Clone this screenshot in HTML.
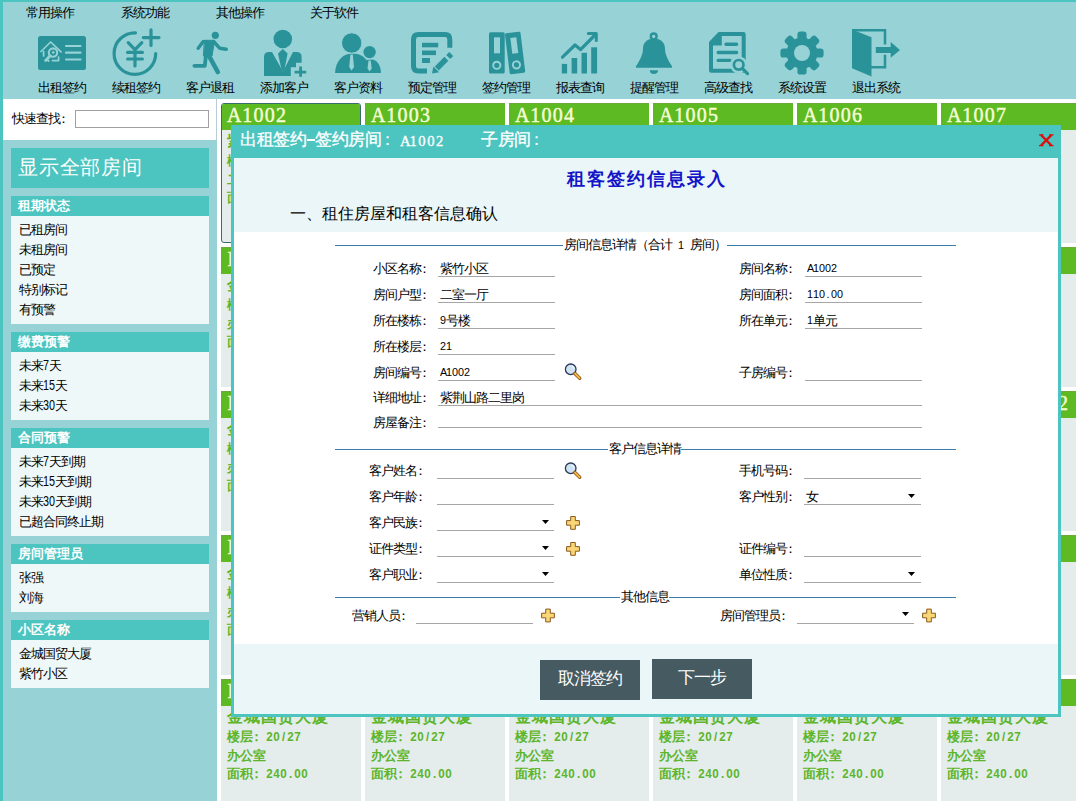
<!DOCTYPE html>
<html><head><meta charset="utf-8"><style>
*{margin:0;padding:0;box-sizing:border-box}
body{width:1076px;height:801px;overflow:hidden;position:relative;background:#fff;font-family:"Liberation Sans",sans-serif;font-size:12px;color:#000}
.a{position:absolute;white-space:nowrap}
.blk{left:11px;width:198px}
.bh{height:20px;background:#4cc4bf;color:#fff;font-weight:900;padding-left:7px;line-height:20px}
.bl{background:#eef8f9;padding:4px 0 4px 8px;line-height:20px}
.card{width:140px;height:140px;background:#e4ecec;overflow:hidden}
.ch{position:absolute;left:0;top:0;width:140px;height:27px;background:#5dba22;border-top:1px solid #6ca83e}
.cn{position:absolute;top:-1px;color:#f6ffd6;font-family:"Liberation Serif",serif;font-size:20px;line-height:27px;-webkit-text-stroke:0.45px #f6ffd6}
.cb{position:absolute;left:6px;color:#5cb52a;font-weight:bold;white-space:nowrap}
.ul{position:absolute;height:1px;background:#a6a6a6}
.fsl{position:absolute;height:1px;background:#3a7dab}
.btn{position:absolute;background:#465a61;color:#fff;text-align:center;font-weight:300}
</style></head><body>
<div class="a" style="left:0;top:0;width:1076px;height:99px;background:#96d2d6"></div>
<div class="a" style="left:0;top:0;width:1076px;height:2px;background:#4cc4bf"></div>
<div class="a" style="left:0;top:0;width:3px;height:801px;background:#4cc4bf"></div>
<div class="a" style="left:26px;top:5px;line-height:16px;"><span style="font-size:13.00px;letter-spacing:-1.00px;line-height:0">常用操作</span></div>
<div class="a" style="left:121px;top:5px;line-height:16px;"><span style="font-size:13.00px;letter-spacing:-1.00px;line-height:0">系统功能</span></div>
<div class="a" style="left:216px;top:5px;line-height:16px;"><span style="font-size:13.00px;letter-spacing:-1.00px;line-height:0">其他操作</span></div>
<div class="a" style="left:310px;top:5px;line-height:16px;"><span style="font-size:13.00px;letter-spacing:-1.00px;line-height:0">关于软件</span></div>
<div class="a" style="left:38px;top:80px;line-height:16px;"><span style="font-size:13.00px;letter-spacing:-1.00px;line-height:0">出租签约</span></div>
<div class="a" style="left:112px;top:80px;line-height:16px;"><span style="font-size:13.00px;letter-spacing:-1.00px;line-height:0">续租签约</span></div>
<div class="a" style="left:186px;top:80px;line-height:16px;"><span style="font-size:13.00px;letter-spacing:-1.00px;line-height:0">客户退租</span></div>
<div class="a" style="left:260px;top:80px;line-height:16px;"><span style="font-size:13.00px;letter-spacing:-1.00px;line-height:0">添加客户</span></div>
<div class="a" style="left:334px;top:80px;line-height:16px;"><span style="font-size:13.00px;letter-spacing:-1.00px;line-height:0">客户资料</span></div>
<div class="a" style="left:408px;top:80px;line-height:16px;"><span style="font-size:13.00px;letter-spacing:-1.00px;line-height:0">预定管理</span></div>
<div class="a" style="left:482px;top:80px;line-height:16px;"><span style="font-size:13.00px;letter-spacing:-1.00px;line-height:0">签约管理</span></div>
<div class="a" style="left:556px;top:80px;line-height:16px;"><span style="font-size:13.00px;letter-spacing:-1.00px;line-height:0">报表查询</span></div>
<div class="a" style="left:630px;top:80px;line-height:16px;"><span style="font-size:13.00px;letter-spacing:-1.00px;line-height:0">提醒管理</span></div>
<div class="a" style="left:704px;top:80px;line-height:16px;"><span style="font-size:13.00px;letter-spacing:-1.00px;line-height:0">高级查找</span></div>
<div class="a" style="left:778px;top:80px;line-height:16px;"><span style="font-size:13.00px;letter-spacing:-1.00px;line-height:0">系统设置</span></div>
<div class="a" style="left:852px;top:80px;line-height:16px;"><span style="font-size:13.00px;letter-spacing:-1.00px;line-height:0">退出系统</span></div>
<svg class="a" style="left:0;top:0" width="1076" height="99" viewBox="0 0 1076 99">
<!-- 1 出租签约 -->
<rect x="38" y="36" width="48" height="34" rx="2.5" fill="#2a939a"/>
<g fill="none" stroke="#96d2d6" stroke-width="1.7" stroke-linecap="round" stroke-linejoin="round">
<path d="M41 51.5 L50.7 42 L61 51.8"/>
<path d="M43.6 51.5 V56"/>
<path d="M52.5 60.6 H58.6 V57"/>
<circle cx="53" cy="52.6" r="4.2" stroke-width="2.1"/>
<circle cx="53.2" cy="52.4" r="0.9" fill="#96d2d6" stroke-width="1"/>
<path d="M50.2 55.8 L45.6 60.4" stroke-width="2.8"/>
<path d="M47.2 59.6 L48.6 61" stroke-width="1.8"/>
</g>
<g stroke="#96d2d6" stroke-width="2.2" stroke-linecap="round">
<path d="M66 46 H80.5 M66 52.7 H80.5 M66 59.5 H80.5"/>
</g>
<!-- 2 续租签约 -->
<g fill="none" stroke="#2a939a" stroke-width="3.2" stroke-linecap="round">
<path d="M135.5 32.8 A20.8 20.8 0 1 0 155.7 53.6"/>
<path d="M151 29.8 V45.5 M143.3 37.6 H159"/>
<path d="M128.2 42.6 L135 49.6 L141.8 42.6 M127.6 52.4 H142.4 M127.6 59 H142.4 M135 49.6 V66"/>
</g>
<!-- 3 客户退租 -->
<circle cx="215.3" cy="35.3" r="3.6" fill="#2a939a"/>
<g fill="none" stroke="#2a939a" stroke-linecap="round" stroke-linejoin="round">
<path d="M204.6 40.3 L214.6 40.3 L212 56 L203.8 56 Z" fill="#2a939a" stroke="#2a939a" stroke-width="1" stroke-linejoin="round"/>
<path d="M207 41.8 H203 L198.2 48.3" stroke-width="3.4"/>
<path d="M213.6 41.5 L219.6 48.2 L226.3 49.3" stroke-width="3.4"/>
<path d="M206 55 L204.8 65.8 L194.4 65.8" stroke-width="3.8"/>
<path d="M208.8 55.5 L217.8 72" stroke-width="4.6"/>
</g>
<!-- 4 添加客户 -->
<circle cx="282.8" cy="39" r="9.3" fill="#2a939a"/>
<path d="M264 76 V57 Q264 52 269 52 H272 L283 71.5 L293 52 H296.6 Q301.6 52 301.6 57 V62.8 H296 V67.2 H290.8 V76 Z" fill="#2a939a"/>
<path d="M282.8 49 L287.6 53.6 L284.2 70.8 L281.8 70.8 L278 53.6 Z" fill="#2a939a"/>
<path d="M294.6 72.2 H306.2 M300.6 66.4 V76.8" stroke="#2a939a" stroke-width="2.8"/>
<!-- 5 客户资料 -->
<path d="M335 73 C335.5 62 342 53.5 352 53.5 C360 53.5 365 57 367 61 L370 73 Z" fill="#2a939a"/>
<path d="M361 73 C361 64.5 364.5 59.3 370.5 59.3 C376.5 59.3 380.8 64.5 381 73 Z" fill="#2a939a"/>
<circle cx="351.7" cy="43" r="10.2" fill="#2a939a" stroke="#96d2d6" stroke-width="1"/>
<circle cx="369.6" cy="52.1" r="6.9" fill="#2a939a" stroke="#96d2d6" stroke-width="1.4"/>
<rect x="334" y="73" width="49" height="3" fill="#96d2d6"/>
<path d="M350.4 54.6 L352.8 54.6 L354 67 L351.6 70.6 L349.2 67 Z" fill="#96d2d6"/>
<path d="M368.5 60.4 L370.7 60.4 L371.7 68.6 L369.6 71.6 L367.5 68.6 Z" fill="#96d2d6"/>
<!-- 6 预定管理 -->
<path d="M427 71 H418.5 Q413.5 71 413.5 66 V39.5 Q413.5 34.6 418.5 34.6 H445 Q449.8 34.6 449.8 39.5 V47.8" fill="none" stroke="#2a939a" stroke-width="5"/>
<rect x="422" y="42.8" width="16.2" height="4.5" fill="#2a939a"/>
<rect x="422" y="50.5" width="14" height="4.6" fill="#2a939a"/>
<rect x="422" y="58" width="8" height="5" fill="#2a939a"/>
<path d="M436.8 68.4 L446.4 58.8" stroke="#2a939a" stroke-width="5.6"/>
<path d="M448.2 57 L451.2 54" stroke="#2a939a" stroke-width="5.6"/>
<path d="M432 73.6 L433.4 66.6 L439.2 72.2 Z" fill="#2a939a"/>
<!-- 7 签约管理 -->
<rect x="489" y="32.2" width="15.7" height="41.3" rx="1.5" fill="#2a939a"/>
<rect x="494" y="37.3" width="6" height="16" fill="#96d2d6"/>
<circle cx="496.8" cy="65.3" r="3.6" fill="none" stroke="#96d2d6" stroke-width="1.9"/>
<g transform="rotate(-7 515 53)">
<rect x="507.3" y="32.4" width="15.6" height="41.2" rx="1.5" fill="#2a939a"/>
<rect x="512.2" y="37.5" width="6" height="16" fill="#96d2d6"/>
<circle cx="515" cy="65" r="3.6" fill="none" stroke="#96d2d6" stroke-width="1.9"/>
</g>
<!-- 8 报表查询 -->
<rect x="561.8" y="63.9" width="5.3" height="9.6" fill="#2a939a"/>
<rect x="571.6" y="58" width="5.6" height="15.5" fill="#2a939a"/>
<rect x="581.5" y="52.8" width="5.5" height="20.7" fill="#2a939a"/>
<rect x="591.2" y="47.3" width="5.9" height="26.2" fill="#2a939a"/>
<path d="M562.5 57.2 L575 45 L580.5 49.6 L595 35" fill="none" stroke="#2a939a" stroke-width="3.2" stroke-linecap="round" stroke-linejoin="round"/>
<path d="M588.3 33.4 H596.3 V40.6" fill="none" stroke="#2a939a" stroke-width="3" stroke-linecap="round" stroke-linejoin="round"/>
<!-- 9 提醒管理 -->
<circle cx="653.7" cy="36.4" r="2.9" fill="none" stroke="#2a939a" stroke-width="2.4"/>
<path d="M637 67.8 Q635 67.8 636.3 65.8 C641 59 643 53 643 48.5 C643 42.5 647.5 38.6 654 38.6 C660.5 38.6 665 42.5 665 48.5 C665 53 667 59 671.7 65.8 Q673 67.8 671 67.8 Z" fill="#2a939a"/>
<path d="M649.8 70.3 A4.1 3.6 0 0 0 658 70.3 Z" fill="#2a939a"/>
<!-- 10 高级查找 -->
<path fill-rule="evenodd" fill="#2a939a" d="M709 42 L718.5 32 H743.5 Q745.7 32 745.7 34.2 V70.5 Q745.7 72.7 743.5 72.7 H711.2 Q709 72.7 709 70.5 Z M713 45.5 H721.8 V36 H741.7 V68.7 H713 Z"/>
<path d="M726 44.2 H736.6 M718.2 52.5 H736.6 M718.2 60.4 H730" stroke="#2a939a" stroke-width="3.4" stroke-linecap="round"/>
<circle cx="738.7" cy="64.8" r="8.6" fill="#96d2d6"/>
<circle cx="738.7" cy="64.8" r="4.8" fill="none" stroke="#2a939a" stroke-width="2.7"/>
<path d="M742.5 68.6 L747.5 73.6" stroke="#2a939a" stroke-width="3.2" stroke-linecap="round"/>
<!-- 11 系统设置 -->
<circle cx="802" cy="53" r="15.5" fill="#2a939a"/><rect x="797.4" y="31.4" width="9.2" height="12" rx="3.2" fill="#2a939a" transform="rotate(0 802 53)"/><rect x="797.4" y="31.4" width="9.2" height="12" rx="3.2" fill="#2a939a" transform="rotate(45 802 53)"/><rect x="797.4" y="31.4" width="9.2" height="12" rx="3.2" fill="#2a939a" transform="rotate(90 802 53)"/><rect x="797.4" y="31.4" width="9.2" height="12" rx="3.2" fill="#2a939a" transform="rotate(135 802 53)"/><rect x="797.4" y="31.4" width="9.2" height="12" rx="3.2" fill="#2a939a" transform="rotate(180 802 53)"/><rect x="797.4" y="31.4" width="9.2" height="12" rx="3.2" fill="#2a939a" transform="rotate(225 802 53)"/><rect x="797.4" y="31.4" width="9.2" height="12" rx="3.2" fill="#2a939a" transform="rotate(270 802 53)"/><rect x="797.4" y="31.4" width="9.2" height="12" rx="3.2" fill="#2a939a" transform="rotate(315 802 53)"/><circle cx="802" cy="53" r="8" fill="#96d2d6"/>
<!-- 12 退出系统 -->
<path d="M852 30.2 H885 V44.6 M885 54.7 V67.2 H871" fill="none" stroke="#2a939a" stroke-width="2.5"/>
<path d="M852 29 L857 31.4 L871.5 37.2 V76.6 L852 68.3 Z" fill="#2a939a"/>
<rect x="875.8" y="47" width="15.5" height="6" fill="#2a939a"/>
<path d="M890.7 42 L900 50 L890.7 57.8 Z" fill="#2a939a"/>
</svg>
<div class="a" style="left:3px;top:99px;width:214px;height:702px;background:#96d2d6"></div>
<div class="a" style="left:3px;top:99px;width:213px;height:41px;background:#fff"></div>
<div class="a" style="left:216px;top:99px;width:1px;height:41px;background:#b9cdd9"></div>
<div class="a" style="left:12px;top:111px;line-height:16px;"><span style="font-size:13.00px;letter-spacing:-1.00px;line-height:0">快速查找</span><span style="font-size:13.00px;letter-spacing:-1.00px;line-height:0;position:relative;left:-2.64px">：</span></div>
<div class="a" style="left:75px;top:110px;width:134px;height:18px;border:1px solid #a0a0a0;background:#fff"></div>
<div class="a blk" style="top:148px;height:40px;background:#4cc4bf"></div>
<div class="a" style="left:18px;top:156px;line-height:24px;color:#fff;font-family:'Liberation Serif',serif"><span style="font-size:19.5px;letter-spacing:0.8px">显示全部房间</span></div>
<div class="a blk" style="top:196px"><div class="bh"><span style="font-size:13.00px;letter-spacing:0.00px;line-height:0">租期状态</span></div><div class="bl"><div><span style="font-size:13.00px;letter-spacing:-1.00px;line-height:0">已租房间</span></div><div><span style="font-size:13.00px;letter-spacing:-1.00px;line-height:0">未租房间</span></div><div><span style="font-size:13.00px;letter-spacing:-1.00px;line-height:0">已预定</span></div><div><span style="font-size:13.00px;letter-spacing:-1.00px;line-height:0">特别标记</span></div><div><span style="font-size:13.00px;letter-spacing:-1.00px;line-height:0">有预警</span></div></div></div>
<div class="a blk" style="top:332px"><div class="bh"><span style="font-size:13.00px;letter-spacing:0.00px;line-height:0">缴费预警</span></div><div class="bl"><div><span style="font-size:13.00px;letter-spacing:-1.00px;line-height:0">未来</span><span style="display:inline-block;width:6.0px;padding-left:0.00px;line-height:0;font-size:14.00px;transform:scaleX(0.77);transform-origin:0 0">7</span><span style="font-size:13.00px;letter-spacing:-1.00px;line-height:0">天</span></div><div><span style="font-size:13.00px;letter-spacing:-1.00px;line-height:0">未来</span><span style="display:inline-block;width:6.0px;padding-left:0.00px;line-height:0;font-size:14.00px;transform:scaleX(0.77);transform-origin:0 0">1</span><span style="display:inline-block;width:6.0px;padding-left:0.00px;line-height:0;font-size:14.00px;transform:scaleX(0.77);transform-origin:0 0">5</span><span style="font-size:13.00px;letter-spacing:-1.00px;line-height:0">天</span></div><div><span style="font-size:13.00px;letter-spacing:-1.00px;line-height:0">未来</span><span style="display:inline-block;width:6.0px;padding-left:0.00px;line-height:0;font-size:14.00px;transform:scaleX(0.77);transform-origin:0 0">3</span><span style="display:inline-block;width:6.0px;padding-left:0.00px;line-height:0;font-size:14.00px;transform:scaleX(0.77);transform-origin:0 0">0</span><span style="font-size:13.00px;letter-spacing:-1.00px;line-height:0">天</span></div></div></div>
<div class="a blk" style="top:428px"><div class="bh"><span style="font-size:13.00px;letter-spacing:0.00px;line-height:0">合同预警</span></div><div class="bl"><div><span style="font-size:13.00px;letter-spacing:-1.00px;line-height:0">未来</span><span style="display:inline-block;width:6.0px;padding-left:0.00px;line-height:0;font-size:14.00px;transform:scaleX(0.77);transform-origin:0 0">7</span><span style="font-size:13.00px;letter-spacing:-1.00px;line-height:0">天到期</span></div><div><span style="font-size:13.00px;letter-spacing:-1.00px;line-height:0">未来</span><span style="display:inline-block;width:6.0px;padding-left:0.00px;line-height:0;font-size:14.00px;transform:scaleX(0.77);transform-origin:0 0">1</span><span style="display:inline-block;width:6.0px;padding-left:0.00px;line-height:0;font-size:14.00px;transform:scaleX(0.77);transform-origin:0 0">5</span><span style="font-size:13.00px;letter-spacing:-1.00px;line-height:0">天到期</span></div><div><span style="font-size:13.00px;letter-spacing:-1.00px;line-height:0">未来</span><span style="display:inline-block;width:6.0px;padding-left:0.00px;line-height:0;font-size:14.00px;transform:scaleX(0.77);transform-origin:0 0">3</span><span style="display:inline-block;width:6.0px;padding-left:0.00px;line-height:0;font-size:14.00px;transform:scaleX(0.77);transform-origin:0 0">0</span><span style="font-size:13.00px;letter-spacing:-1.00px;line-height:0">天到期</span></div><div><span style="font-size:13.00px;letter-spacing:-1.00px;line-height:0">已超合同终止期</span></div></div></div>
<div class="a blk" style="top:544px"><div class="bh"><span style="font-size:13.00px;letter-spacing:0.00px;line-height:0">房间管理员</span></div><div class="bl"><div><span style="font-size:13.00px;letter-spacing:-1.00px;line-height:0">张强</span></div><div><span style="font-size:13.00px;letter-spacing:-1.00px;line-height:0">刘海</span></div></div></div>
<div class="a blk" style="top:620px"><div class="bh"><span style="font-size:13.00px;letter-spacing:0.00px;line-height:0">小区名称</span></div><div class="bl"><div><span style="font-size:13.00px;letter-spacing:-1.00px;line-height:0">金城国贸大厦</span></div><div><span style="font-size:13.00px;letter-spacing:-1.00px;line-height:0">紫竹小区</span></div></div></div>
<div class="a" style="left:217px;top:99px;width:859px;height:702px;background:#fff"></div>
<div class="a card" style="left:221px;top:103px;border:1px solid #3a6c6c;border-radius:3px;"><div style="position:absolute;left:-1px;top:-1px;width:140px;height:140px"><div class="ch"></div><div class="cn" style="left:6px"><span style="display:inline-block;width:14.5px;text-align:center">A</span><span style="display:inline-block;width:11.3px;text-align:center">1</span><span style="display:inline-block;width:11.3px;text-align:center">0</span><span style="display:inline-block;width:11.3px;text-align:center">0</span><span style="display:inline-block;width:11.3px;text-align:center">2</span></div><div class="cb" style="top:29px;line-height:20px;letter-spacing:0"><span style="font-size:16.00px;letter-spacing:1.00px;line-height:0">紫竹小区</span></div><div class="cb" style="top:50px;line-height:16px"><span style="font-size:13.00px;letter-spacing:0.00px;line-height:0">楼层</span><span style="font-size:13.00px;letter-spacing:0.00px;line-height:0;position:relative;left:-2.86px">：</span><span style="display:inline-block;width:7px;padding-left:0.28px;line-height:0;font-size:11.96px;transform:scaleX(0.97);transform-origin:0 0">2</span><span style="display:inline-block;width:7px;padding-left:0.28px;line-height:0;font-size:11.96px;transform:scaleX(0.97);transform-origin:0 0">1</span><span style="display:inline-block;width:7px;padding-left:1.95px;line-height:0;font-size:11.96px;transform:scaleX(0.97);transform-origin:0 0">/</span><span style="display:inline-block;width:7px;padding-left:0.28px;line-height:0;font-size:11.96px;transform:scaleX(0.97);transform-origin:0 0">3</span><span style="display:inline-block;width:7px;padding-left:0.28px;line-height:0;font-size:11.96px;transform:scaleX(0.97);transform-origin:0 0">2</span></div><div class="cb" style="top:69px;line-height:16px"><span style="font-size:13.00px;letter-spacing:0.00px;line-height:0">二室一厅</span></div><div class="cb" style="top:87px;line-height:16px"><span style="font-size:13.00px;letter-spacing:0.00px;line-height:0">面积</span><span style="font-size:13.00px;letter-spacing:0.00px;line-height:0;position:relative;left:-2.86px">：</span><span style="display:inline-block;width:7px;padding-left:0.28px;line-height:0;font-size:11.96px;transform:scaleX(0.97);transform-origin:0 0">1</span><span style="display:inline-block;width:7px;padding-left:0.28px;line-height:0;font-size:11.96px;transform:scaleX(0.97);transform-origin:0 0">1</span><span style="display:inline-block;width:7px;padding-left:0.28px;line-height:0;font-size:11.96px;transform:scaleX(0.97);transform-origin:0 0">0</span><span style="display:inline-block;width:7px;padding-left:1.95px;line-height:0;font-size:11.96px;transform:scaleX(0.97);transform-origin:0 0">.</span><span style="display:inline-block;width:7px;padding-left:0.28px;line-height:0;font-size:11.96px;transform:scaleX(0.97);transform-origin:0 0">0</span><span style="display:inline-block;width:7px;padding-left:0.28px;line-height:0;font-size:11.96px;transform:scaleX(0.97);transform-origin:0 0">0</span></div></div></div>
<div class="a card" style="left:365px;top:103px"><div class="ch"></div><div class="cn" style="left:6px"><span style="display:inline-block;width:14.5px;text-align:center">A</span><span style="display:inline-block;width:11.3px;text-align:center">1</span><span style="display:inline-block;width:11.3px;text-align:center">0</span><span style="display:inline-block;width:11.3px;text-align:center">0</span><span style="display:inline-block;width:11.3px;text-align:center">3</span></div><div class="cb" style="top:29px;line-height:20px;letter-spacing:0"><span style="font-size:16.00px;letter-spacing:1.00px;line-height:0">金城国贸大厦</span></div><div class="cb" style="top:50px;line-height:16px"><span style="font-size:13.00px;letter-spacing:0.00px;line-height:0">楼层</span><span style="font-size:13.00px;letter-spacing:0.00px;line-height:0;position:relative;left:-2.86px">：</span><span style="display:inline-block;width:7px;padding-left:0.28px;line-height:0;font-size:11.96px;transform:scaleX(0.97);transform-origin:0 0">2</span><span style="display:inline-block;width:7px;padding-left:0.28px;line-height:0;font-size:11.96px;transform:scaleX(0.97);transform-origin:0 0">0</span><span style="display:inline-block;width:7px;padding-left:1.95px;line-height:0;font-size:11.96px;transform:scaleX(0.97);transform-origin:0 0">/</span><span style="display:inline-block;width:7px;padding-left:0.28px;line-height:0;font-size:11.96px;transform:scaleX(0.97);transform-origin:0 0">2</span><span style="display:inline-block;width:7px;padding-left:0.28px;line-height:0;font-size:11.96px;transform:scaleX(0.97);transform-origin:0 0">7</span></div><div class="cb" style="top:69px;line-height:16px"><span style="font-size:13.00px;letter-spacing:0.00px;line-height:0">办公室</span></div><div class="cb" style="top:87px;line-height:16px"><span style="font-size:13.00px;letter-spacing:0.00px;line-height:0">面积</span><span style="font-size:13.00px;letter-spacing:0.00px;line-height:0;position:relative;left:-2.86px">：</span><span style="display:inline-block;width:7px;padding-left:0.28px;line-height:0;font-size:11.96px;transform:scaleX(0.97);transform-origin:0 0">2</span><span style="display:inline-block;width:7px;padding-left:0.28px;line-height:0;font-size:11.96px;transform:scaleX(0.97);transform-origin:0 0">4</span><span style="display:inline-block;width:7px;padding-left:0.28px;line-height:0;font-size:11.96px;transform:scaleX(0.97);transform-origin:0 0">0</span><span style="display:inline-block;width:7px;padding-left:1.95px;line-height:0;font-size:11.96px;transform:scaleX(0.97);transform-origin:0 0">.</span><span style="display:inline-block;width:7px;padding-left:0.28px;line-height:0;font-size:11.96px;transform:scaleX(0.97);transform-origin:0 0">0</span><span style="display:inline-block;width:7px;padding-left:0.28px;line-height:0;font-size:11.96px;transform:scaleX(0.97);transform-origin:0 0">0</span></div></div>
<div class="a card" style="left:509px;top:103px"><div class="ch"></div><div class="cn" style="left:6px"><span style="display:inline-block;width:14.5px;text-align:center">A</span><span style="display:inline-block;width:11.3px;text-align:center">1</span><span style="display:inline-block;width:11.3px;text-align:center">0</span><span style="display:inline-block;width:11.3px;text-align:center">0</span><span style="display:inline-block;width:11.3px;text-align:center">4</span></div><div class="cb" style="top:29px;line-height:20px;letter-spacing:0"><span style="font-size:16.00px;letter-spacing:1.00px;line-height:0">金城国贸大厦</span></div><div class="cb" style="top:50px;line-height:16px"><span style="font-size:13.00px;letter-spacing:0.00px;line-height:0">楼层</span><span style="font-size:13.00px;letter-spacing:0.00px;line-height:0;position:relative;left:-2.86px">：</span><span style="display:inline-block;width:7px;padding-left:0.28px;line-height:0;font-size:11.96px;transform:scaleX(0.97);transform-origin:0 0">2</span><span style="display:inline-block;width:7px;padding-left:0.28px;line-height:0;font-size:11.96px;transform:scaleX(0.97);transform-origin:0 0">0</span><span style="display:inline-block;width:7px;padding-left:1.95px;line-height:0;font-size:11.96px;transform:scaleX(0.97);transform-origin:0 0">/</span><span style="display:inline-block;width:7px;padding-left:0.28px;line-height:0;font-size:11.96px;transform:scaleX(0.97);transform-origin:0 0">2</span><span style="display:inline-block;width:7px;padding-left:0.28px;line-height:0;font-size:11.96px;transform:scaleX(0.97);transform-origin:0 0">7</span></div><div class="cb" style="top:69px;line-height:16px"><span style="font-size:13.00px;letter-spacing:0.00px;line-height:0">办公室</span></div><div class="cb" style="top:87px;line-height:16px"><span style="font-size:13.00px;letter-spacing:0.00px;line-height:0">面积</span><span style="font-size:13.00px;letter-spacing:0.00px;line-height:0;position:relative;left:-2.86px">：</span><span style="display:inline-block;width:7px;padding-left:0.28px;line-height:0;font-size:11.96px;transform:scaleX(0.97);transform-origin:0 0">2</span><span style="display:inline-block;width:7px;padding-left:0.28px;line-height:0;font-size:11.96px;transform:scaleX(0.97);transform-origin:0 0">4</span><span style="display:inline-block;width:7px;padding-left:0.28px;line-height:0;font-size:11.96px;transform:scaleX(0.97);transform-origin:0 0">0</span><span style="display:inline-block;width:7px;padding-left:1.95px;line-height:0;font-size:11.96px;transform:scaleX(0.97);transform-origin:0 0">.</span><span style="display:inline-block;width:7px;padding-left:0.28px;line-height:0;font-size:11.96px;transform:scaleX(0.97);transform-origin:0 0">0</span><span style="display:inline-block;width:7px;padding-left:0.28px;line-height:0;font-size:11.96px;transform:scaleX(0.97);transform-origin:0 0">0</span></div></div>
<div class="a card" style="left:653px;top:103px"><div class="ch"></div><div class="cn" style="left:6px"><span style="display:inline-block;width:14.5px;text-align:center">A</span><span style="display:inline-block;width:11.3px;text-align:center">1</span><span style="display:inline-block;width:11.3px;text-align:center">0</span><span style="display:inline-block;width:11.3px;text-align:center">0</span><span style="display:inline-block;width:11.3px;text-align:center">5</span></div><div class="cb" style="top:29px;line-height:20px;letter-spacing:0"><span style="font-size:16.00px;letter-spacing:1.00px;line-height:0">金城国贸大厦</span></div><div class="cb" style="top:50px;line-height:16px"><span style="font-size:13.00px;letter-spacing:0.00px;line-height:0">楼层</span><span style="font-size:13.00px;letter-spacing:0.00px;line-height:0;position:relative;left:-2.86px">：</span><span style="display:inline-block;width:7px;padding-left:0.28px;line-height:0;font-size:11.96px;transform:scaleX(0.97);transform-origin:0 0">2</span><span style="display:inline-block;width:7px;padding-left:0.28px;line-height:0;font-size:11.96px;transform:scaleX(0.97);transform-origin:0 0">0</span><span style="display:inline-block;width:7px;padding-left:1.95px;line-height:0;font-size:11.96px;transform:scaleX(0.97);transform-origin:0 0">/</span><span style="display:inline-block;width:7px;padding-left:0.28px;line-height:0;font-size:11.96px;transform:scaleX(0.97);transform-origin:0 0">2</span><span style="display:inline-block;width:7px;padding-left:0.28px;line-height:0;font-size:11.96px;transform:scaleX(0.97);transform-origin:0 0">7</span></div><div class="cb" style="top:69px;line-height:16px"><span style="font-size:13.00px;letter-spacing:0.00px;line-height:0">办公室</span></div><div class="cb" style="top:87px;line-height:16px"><span style="font-size:13.00px;letter-spacing:0.00px;line-height:0">面积</span><span style="font-size:13.00px;letter-spacing:0.00px;line-height:0;position:relative;left:-2.86px">：</span><span style="display:inline-block;width:7px;padding-left:0.28px;line-height:0;font-size:11.96px;transform:scaleX(0.97);transform-origin:0 0">2</span><span style="display:inline-block;width:7px;padding-left:0.28px;line-height:0;font-size:11.96px;transform:scaleX(0.97);transform-origin:0 0">4</span><span style="display:inline-block;width:7px;padding-left:0.28px;line-height:0;font-size:11.96px;transform:scaleX(0.97);transform-origin:0 0">0</span><span style="display:inline-block;width:7px;padding-left:1.95px;line-height:0;font-size:11.96px;transform:scaleX(0.97);transform-origin:0 0">.</span><span style="display:inline-block;width:7px;padding-left:0.28px;line-height:0;font-size:11.96px;transform:scaleX(0.97);transform-origin:0 0">0</span><span style="display:inline-block;width:7px;padding-left:0.28px;line-height:0;font-size:11.96px;transform:scaleX(0.97);transform-origin:0 0">0</span></div></div>
<div class="a card" style="left:797px;top:103px"><div class="ch"></div><div class="cn" style="left:6px"><span style="display:inline-block;width:14.5px;text-align:center">A</span><span style="display:inline-block;width:11.3px;text-align:center">1</span><span style="display:inline-block;width:11.3px;text-align:center">0</span><span style="display:inline-block;width:11.3px;text-align:center">0</span><span style="display:inline-block;width:11.3px;text-align:center">6</span></div><div class="cb" style="top:29px;line-height:20px;letter-spacing:0"><span style="font-size:16.00px;letter-spacing:1.00px;line-height:0">金城国贸大厦</span></div><div class="cb" style="top:50px;line-height:16px"><span style="font-size:13.00px;letter-spacing:0.00px;line-height:0">楼层</span><span style="font-size:13.00px;letter-spacing:0.00px;line-height:0;position:relative;left:-2.86px">：</span><span style="display:inline-block;width:7px;padding-left:0.28px;line-height:0;font-size:11.96px;transform:scaleX(0.97);transform-origin:0 0">2</span><span style="display:inline-block;width:7px;padding-left:0.28px;line-height:0;font-size:11.96px;transform:scaleX(0.97);transform-origin:0 0">0</span><span style="display:inline-block;width:7px;padding-left:1.95px;line-height:0;font-size:11.96px;transform:scaleX(0.97);transform-origin:0 0">/</span><span style="display:inline-block;width:7px;padding-left:0.28px;line-height:0;font-size:11.96px;transform:scaleX(0.97);transform-origin:0 0">2</span><span style="display:inline-block;width:7px;padding-left:0.28px;line-height:0;font-size:11.96px;transform:scaleX(0.97);transform-origin:0 0">7</span></div><div class="cb" style="top:69px;line-height:16px"><span style="font-size:13.00px;letter-spacing:0.00px;line-height:0">办公室</span></div><div class="cb" style="top:87px;line-height:16px"><span style="font-size:13.00px;letter-spacing:0.00px;line-height:0">面积</span><span style="font-size:13.00px;letter-spacing:0.00px;line-height:0;position:relative;left:-2.86px">：</span><span style="display:inline-block;width:7px;padding-left:0.28px;line-height:0;font-size:11.96px;transform:scaleX(0.97);transform-origin:0 0">2</span><span style="display:inline-block;width:7px;padding-left:0.28px;line-height:0;font-size:11.96px;transform:scaleX(0.97);transform-origin:0 0">4</span><span style="display:inline-block;width:7px;padding-left:0.28px;line-height:0;font-size:11.96px;transform:scaleX(0.97);transform-origin:0 0">0</span><span style="display:inline-block;width:7px;padding-left:1.95px;line-height:0;font-size:11.96px;transform:scaleX(0.97);transform-origin:0 0">.</span><span style="display:inline-block;width:7px;padding-left:0.28px;line-height:0;font-size:11.96px;transform:scaleX(0.97);transform-origin:0 0">0</span><span style="display:inline-block;width:7px;padding-left:0.28px;line-height:0;font-size:11.96px;transform:scaleX(0.97);transform-origin:0 0">0</span></div></div>
<div class="a card" style="left:941px;top:103px"><div class="ch"></div><div class="cn" style="left:6px"><span style="display:inline-block;width:14.5px;text-align:center">A</span><span style="display:inline-block;width:11.3px;text-align:center">1</span><span style="display:inline-block;width:11.3px;text-align:center">0</span><span style="display:inline-block;width:11.3px;text-align:center">0</span><span style="display:inline-block;width:11.3px;text-align:center">7</span></div><div class="cb" style="top:29px;line-height:20px;letter-spacing:0"><span style="font-size:16.00px;letter-spacing:1.00px;line-height:0">金城国贸大厦</span></div><div class="cb" style="top:50px;line-height:16px"><span style="font-size:13.00px;letter-spacing:0.00px;line-height:0">楼层</span><span style="font-size:13.00px;letter-spacing:0.00px;line-height:0;position:relative;left:-2.86px">：</span><span style="display:inline-block;width:7px;padding-left:0.28px;line-height:0;font-size:11.96px;transform:scaleX(0.97);transform-origin:0 0">2</span><span style="display:inline-block;width:7px;padding-left:0.28px;line-height:0;font-size:11.96px;transform:scaleX(0.97);transform-origin:0 0">0</span><span style="display:inline-block;width:7px;padding-left:1.95px;line-height:0;font-size:11.96px;transform:scaleX(0.97);transform-origin:0 0">/</span><span style="display:inline-block;width:7px;padding-left:0.28px;line-height:0;font-size:11.96px;transform:scaleX(0.97);transform-origin:0 0">2</span><span style="display:inline-block;width:7px;padding-left:0.28px;line-height:0;font-size:11.96px;transform:scaleX(0.97);transform-origin:0 0">7</span></div><div class="cb" style="top:69px;line-height:16px"><span style="font-size:13.00px;letter-spacing:0.00px;line-height:0">办公室</span></div><div class="cb" style="top:87px;line-height:16px"><span style="font-size:13.00px;letter-spacing:0.00px;line-height:0">面积</span><span style="font-size:13.00px;letter-spacing:0.00px;line-height:0;position:relative;left:-2.86px">：</span><span style="display:inline-block;width:7px;padding-left:0.28px;line-height:0;font-size:11.96px;transform:scaleX(0.97);transform-origin:0 0">2</span><span style="display:inline-block;width:7px;padding-left:0.28px;line-height:0;font-size:11.96px;transform:scaleX(0.97);transform-origin:0 0">4</span><span style="display:inline-block;width:7px;padding-left:0.28px;line-height:0;font-size:11.96px;transform:scaleX(0.97);transform-origin:0 0">0</span><span style="display:inline-block;width:7px;padding-left:1.95px;line-height:0;font-size:11.96px;transform:scaleX(0.97);transform-origin:0 0">.</span><span style="display:inline-block;width:7px;padding-left:0.28px;line-height:0;font-size:11.96px;transform:scaleX(0.97);transform-origin:0 0">0</span><span style="display:inline-block;width:7px;padding-left:0.28px;line-height:0;font-size:11.96px;transform:scaleX(0.97);transform-origin:0 0">0</span></div></div>
<div class="a card" style="left:221px;top:247px"><div class="ch"></div><div class="cn" style="left:6px"><span style="display:inline-block;width:14.5px;text-align:center">B</span><span style="display:inline-block;width:11.3px;text-align:center">1</span><span style="display:inline-block;width:11.3px;text-align:center">0</span><span style="display:inline-block;width:11.3px;text-align:center">1</span><span style="display:inline-block;width:11.3px;text-align:center">0</span></div><div class="cb" style="top:29px;line-height:20px;letter-spacing:0"><span style="font-size:16.00px;letter-spacing:1.00px;line-height:0">金城国贸大厦</span></div><div class="cb" style="top:50px;line-height:16px"><span style="font-size:13.00px;letter-spacing:0.00px;line-height:0">楼层</span><span style="font-size:13.00px;letter-spacing:0.00px;line-height:0;position:relative;left:-2.86px">：</span><span style="display:inline-block;width:7px;padding-left:0.28px;line-height:0;font-size:11.96px;transform:scaleX(0.97);transform-origin:0 0">2</span><span style="display:inline-block;width:7px;padding-left:0.28px;line-height:0;font-size:11.96px;transform:scaleX(0.97);transform-origin:0 0">0</span><span style="display:inline-block;width:7px;padding-left:1.95px;line-height:0;font-size:11.96px;transform:scaleX(0.97);transform-origin:0 0">/</span><span style="display:inline-block;width:7px;padding-left:0.28px;line-height:0;font-size:11.96px;transform:scaleX(0.97);transform-origin:0 0">2</span><span style="display:inline-block;width:7px;padding-left:0.28px;line-height:0;font-size:11.96px;transform:scaleX(0.97);transform-origin:0 0">7</span></div><div class="cb" style="top:69px;line-height:16px"><span style="font-size:13.00px;letter-spacing:0.00px;line-height:0">办公室</span></div><div class="cb" style="top:87px;line-height:16px"><span style="font-size:13.00px;letter-spacing:0.00px;line-height:0">面积</span><span style="font-size:13.00px;letter-spacing:0.00px;line-height:0;position:relative;left:-2.86px">：</span><span style="display:inline-block;width:7px;padding-left:0.28px;line-height:0;font-size:11.96px;transform:scaleX(0.97);transform-origin:0 0">2</span><span style="display:inline-block;width:7px;padding-left:0.28px;line-height:0;font-size:11.96px;transform:scaleX(0.97);transform-origin:0 0">4</span><span style="display:inline-block;width:7px;padding-left:0.28px;line-height:0;font-size:11.96px;transform:scaleX(0.97);transform-origin:0 0">0</span><span style="display:inline-block;width:7px;padding-left:1.95px;line-height:0;font-size:11.96px;transform:scaleX(0.97);transform-origin:0 0">.</span><span style="display:inline-block;width:7px;padding-left:0.28px;line-height:0;font-size:11.96px;transform:scaleX(0.97);transform-origin:0 0">0</span><span style="display:inline-block;width:7px;padding-left:0.28px;line-height:0;font-size:11.96px;transform:scaleX(0.97);transform-origin:0 0">0</span></div></div>
<div class="a card" style="left:365px;top:247px"><div class="ch"></div><div class="cn" style="left:6px"><span style="display:inline-block;width:14.5px;text-align:center">B</span><span style="display:inline-block;width:11.3px;text-align:center">1</span><span style="display:inline-block;width:11.3px;text-align:center">0</span><span style="display:inline-block;width:11.3px;text-align:center">1</span><span style="display:inline-block;width:11.3px;text-align:center">1</span></div><div class="cb" style="top:29px;line-height:20px;letter-spacing:0"><span style="font-size:16.00px;letter-spacing:1.00px;line-height:0">金城国贸大厦</span></div><div class="cb" style="top:50px;line-height:16px"><span style="font-size:13.00px;letter-spacing:0.00px;line-height:0">楼层</span><span style="font-size:13.00px;letter-spacing:0.00px;line-height:0;position:relative;left:-2.86px">：</span><span style="display:inline-block;width:7px;padding-left:0.28px;line-height:0;font-size:11.96px;transform:scaleX(0.97);transform-origin:0 0">2</span><span style="display:inline-block;width:7px;padding-left:0.28px;line-height:0;font-size:11.96px;transform:scaleX(0.97);transform-origin:0 0">0</span><span style="display:inline-block;width:7px;padding-left:1.95px;line-height:0;font-size:11.96px;transform:scaleX(0.97);transform-origin:0 0">/</span><span style="display:inline-block;width:7px;padding-left:0.28px;line-height:0;font-size:11.96px;transform:scaleX(0.97);transform-origin:0 0">2</span><span style="display:inline-block;width:7px;padding-left:0.28px;line-height:0;font-size:11.96px;transform:scaleX(0.97);transform-origin:0 0">7</span></div><div class="cb" style="top:69px;line-height:16px"><span style="font-size:13.00px;letter-spacing:0.00px;line-height:0">办公室</span></div><div class="cb" style="top:87px;line-height:16px"><span style="font-size:13.00px;letter-spacing:0.00px;line-height:0">面积</span><span style="font-size:13.00px;letter-spacing:0.00px;line-height:0;position:relative;left:-2.86px">：</span><span style="display:inline-block;width:7px;padding-left:0.28px;line-height:0;font-size:11.96px;transform:scaleX(0.97);transform-origin:0 0">2</span><span style="display:inline-block;width:7px;padding-left:0.28px;line-height:0;font-size:11.96px;transform:scaleX(0.97);transform-origin:0 0">4</span><span style="display:inline-block;width:7px;padding-left:0.28px;line-height:0;font-size:11.96px;transform:scaleX(0.97);transform-origin:0 0">0</span><span style="display:inline-block;width:7px;padding-left:1.95px;line-height:0;font-size:11.96px;transform:scaleX(0.97);transform-origin:0 0">.</span><span style="display:inline-block;width:7px;padding-left:0.28px;line-height:0;font-size:11.96px;transform:scaleX(0.97);transform-origin:0 0">0</span><span style="display:inline-block;width:7px;padding-left:0.28px;line-height:0;font-size:11.96px;transform:scaleX(0.97);transform-origin:0 0">0</span></div></div>
<div class="a card" style="left:509px;top:247px"><div class="ch"></div><div class="cn" style="left:6px"><span style="display:inline-block;width:14.5px;text-align:center">B</span><span style="display:inline-block;width:11.3px;text-align:center">1</span><span style="display:inline-block;width:11.3px;text-align:center">0</span><span style="display:inline-block;width:11.3px;text-align:center">1</span><span style="display:inline-block;width:11.3px;text-align:center">2</span></div><div class="cb" style="top:29px;line-height:20px;letter-spacing:0"><span style="font-size:16.00px;letter-spacing:1.00px;line-height:0">金城国贸大厦</span></div><div class="cb" style="top:50px;line-height:16px"><span style="font-size:13.00px;letter-spacing:0.00px;line-height:0">楼层</span><span style="font-size:13.00px;letter-spacing:0.00px;line-height:0;position:relative;left:-2.86px">：</span><span style="display:inline-block;width:7px;padding-left:0.28px;line-height:0;font-size:11.96px;transform:scaleX(0.97);transform-origin:0 0">2</span><span style="display:inline-block;width:7px;padding-left:0.28px;line-height:0;font-size:11.96px;transform:scaleX(0.97);transform-origin:0 0">0</span><span style="display:inline-block;width:7px;padding-left:1.95px;line-height:0;font-size:11.96px;transform:scaleX(0.97);transform-origin:0 0">/</span><span style="display:inline-block;width:7px;padding-left:0.28px;line-height:0;font-size:11.96px;transform:scaleX(0.97);transform-origin:0 0">2</span><span style="display:inline-block;width:7px;padding-left:0.28px;line-height:0;font-size:11.96px;transform:scaleX(0.97);transform-origin:0 0">7</span></div><div class="cb" style="top:69px;line-height:16px"><span style="font-size:13.00px;letter-spacing:0.00px;line-height:0">办公室</span></div><div class="cb" style="top:87px;line-height:16px"><span style="font-size:13.00px;letter-spacing:0.00px;line-height:0">面积</span><span style="font-size:13.00px;letter-spacing:0.00px;line-height:0;position:relative;left:-2.86px">：</span><span style="display:inline-block;width:7px;padding-left:0.28px;line-height:0;font-size:11.96px;transform:scaleX(0.97);transform-origin:0 0">2</span><span style="display:inline-block;width:7px;padding-left:0.28px;line-height:0;font-size:11.96px;transform:scaleX(0.97);transform-origin:0 0">4</span><span style="display:inline-block;width:7px;padding-left:0.28px;line-height:0;font-size:11.96px;transform:scaleX(0.97);transform-origin:0 0">0</span><span style="display:inline-block;width:7px;padding-left:1.95px;line-height:0;font-size:11.96px;transform:scaleX(0.97);transform-origin:0 0">.</span><span style="display:inline-block;width:7px;padding-left:0.28px;line-height:0;font-size:11.96px;transform:scaleX(0.97);transform-origin:0 0">0</span><span style="display:inline-block;width:7px;padding-left:0.28px;line-height:0;font-size:11.96px;transform:scaleX(0.97);transform-origin:0 0">0</span></div></div>
<div class="a card" style="left:653px;top:247px"><div class="ch"></div><div class="cn" style="left:6px"><span style="display:inline-block;width:14.5px;text-align:center">B</span><span style="display:inline-block;width:11.3px;text-align:center">1</span><span style="display:inline-block;width:11.3px;text-align:center">0</span><span style="display:inline-block;width:11.3px;text-align:center">1</span><span style="display:inline-block;width:11.3px;text-align:center">3</span></div><div class="cb" style="top:29px;line-height:20px;letter-spacing:0"><span style="font-size:16.00px;letter-spacing:1.00px;line-height:0">金城国贸大厦</span></div><div class="cb" style="top:50px;line-height:16px"><span style="font-size:13.00px;letter-spacing:0.00px;line-height:0">楼层</span><span style="font-size:13.00px;letter-spacing:0.00px;line-height:0;position:relative;left:-2.86px">：</span><span style="display:inline-block;width:7px;padding-left:0.28px;line-height:0;font-size:11.96px;transform:scaleX(0.97);transform-origin:0 0">2</span><span style="display:inline-block;width:7px;padding-left:0.28px;line-height:0;font-size:11.96px;transform:scaleX(0.97);transform-origin:0 0">0</span><span style="display:inline-block;width:7px;padding-left:1.95px;line-height:0;font-size:11.96px;transform:scaleX(0.97);transform-origin:0 0">/</span><span style="display:inline-block;width:7px;padding-left:0.28px;line-height:0;font-size:11.96px;transform:scaleX(0.97);transform-origin:0 0">2</span><span style="display:inline-block;width:7px;padding-left:0.28px;line-height:0;font-size:11.96px;transform:scaleX(0.97);transform-origin:0 0">7</span></div><div class="cb" style="top:69px;line-height:16px"><span style="font-size:13.00px;letter-spacing:0.00px;line-height:0">办公室</span></div><div class="cb" style="top:87px;line-height:16px"><span style="font-size:13.00px;letter-spacing:0.00px;line-height:0">面积</span><span style="font-size:13.00px;letter-spacing:0.00px;line-height:0;position:relative;left:-2.86px">：</span><span style="display:inline-block;width:7px;padding-left:0.28px;line-height:0;font-size:11.96px;transform:scaleX(0.97);transform-origin:0 0">2</span><span style="display:inline-block;width:7px;padding-left:0.28px;line-height:0;font-size:11.96px;transform:scaleX(0.97);transform-origin:0 0">4</span><span style="display:inline-block;width:7px;padding-left:0.28px;line-height:0;font-size:11.96px;transform:scaleX(0.97);transform-origin:0 0">0</span><span style="display:inline-block;width:7px;padding-left:1.95px;line-height:0;font-size:11.96px;transform:scaleX(0.97);transform-origin:0 0">.</span><span style="display:inline-block;width:7px;padding-left:0.28px;line-height:0;font-size:11.96px;transform:scaleX(0.97);transform-origin:0 0">0</span><span style="display:inline-block;width:7px;padding-left:0.28px;line-height:0;font-size:11.96px;transform:scaleX(0.97);transform-origin:0 0">0</span></div></div>
<div class="a card" style="left:797px;top:247px"><div class="ch"></div><div class="cn" style="left:6px"><span style="display:inline-block;width:14.5px;text-align:center">B</span><span style="display:inline-block;width:11.3px;text-align:center">1</span><span style="display:inline-block;width:11.3px;text-align:center">0</span><span style="display:inline-block;width:11.3px;text-align:center">1</span><span style="display:inline-block;width:11.3px;text-align:center">4</span></div><div class="cb" style="top:29px;line-height:20px;letter-spacing:0"><span style="font-size:16.00px;letter-spacing:1.00px;line-height:0">金城国贸大厦</span></div><div class="cb" style="top:50px;line-height:16px"><span style="font-size:13.00px;letter-spacing:0.00px;line-height:0">楼层</span><span style="font-size:13.00px;letter-spacing:0.00px;line-height:0;position:relative;left:-2.86px">：</span><span style="display:inline-block;width:7px;padding-left:0.28px;line-height:0;font-size:11.96px;transform:scaleX(0.97);transform-origin:0 0">2</span><span style="display:inline-block;width:7px;padding-left:0.28px;line-height:0;font-size:11.96px;transform:scaleX(0.97);transform-origin:0 0">0</span><span style="display:inline-block;width:7px;padding-left:1.95px;line-height:0;font-size:11.96px;transform:scaleX(0.97);transform-origin:0 0">/</span><span style="display:inline-block;width:7px;padding-left:0.28px;line-height:0;font-size:11.96px;transform:scaleX(0.97);transform-origin:0 0">2</span><span style="display:inline-block;width:7px;padding-left:0.28px;line-height:0;font-size:11.96px;transform:scaleX(0.97);transform-origin:0 0">7</span></div><div class="cb" style="top:69px;line-height:16px"><span style="font-size:13.00px;letter-spacing:0.00px;line-height:0">办公室</span></div><div class="cb" style="top:87px;line-height:16px"><span style="font-size:13.00px;letter-spacing:0.00px;line-height:0">面积</span><span style="font-size:13.00px;letter-spacing:0.00px;line-height:0;position:relative;left:-2.86px">：</span><span style="display:inline-block;width:7px;padding-left:0.28px;line-height:0;font-size:11.96px;transform:scaleX(0.97);transform-origin:0 0">2</span><span style="display:inline-block;width:7px;padding-left:0.28px;line-height:0;font-size:11.96px;transform:scaleX(0.97);transform-origin:0 0">4</span><span style="display:inline-block;width:7px;padding-left:0.28px;line-height:0;font-size:11.96px;transform:scaleX(0.97);transform-origin:0 0">0</span><span style="display:inline-block;width:7px;padding-left:1.95px;line-height:0;font-size:11.96px;transform:scaleX(0.97);transform-origin:0 0">.</span><span style="display:inline-block;width:7px;padding-left:0.28px;line-height:0;font-size:11.96px;transform:scaleX(0.97);transform-origin:0 0">0</span><span style="display:inline-block;width:7px;padding-left:0.28px;line-height:0;font-size:11.96px;transform:scaleX(0.97);transform-origin:0 0">0</span></div></div>
<div class="a card" style="left:941px;top:247px"><div class="ch"></div><div class="cn" style="left:6px"><span style="display:inline-block;width:14.5px;text-align:center">B</span><span style="display:inline-block;width:11.3px;text-align:center">1</span><span style="display:inline-block;width:11.3px;text-align:center">0</span><span style="display:inline-block;width:11.3px;text-align:center">1</span><span style="display:inline-block;width:11.3px;text-align:center">5</span></div><div class="cb" style="top:29px;line-height:20px;letter-spacing:0"><span style="font-size:16.00px;letter-spacing:1.00px;line-height:0">金城国贸大厦</span></div><div class="cb" style="top:50px;line-height:16px"><span style="font-size:13.00px;letter-spacing:0.00px;line-height:0">楼层</span><span style="font-size:13.00px;letter-spacing:0.00px;line-height:0;position:relative;left:-2.86px">：</span><span style="display:inline-block;width:7px;padding-left:0.28px;line-height:0;font-size:11.96px;transform:scaleX(0.97);transform-origin:0 0">2</span><span style="display:inline-block;width:7px;padding-left:0.28px;line-height:0;font-size:11.96px;transform:scaleX(0.97);transform-origin:0 0">0</span><span style="display:inline-block;width:7px;padding-left:1.95px;line-height:0;font-size:11.96px;transform:scaleX(0.97);transform-origin:0 0">/</span><span style="display:inline-block;width:7px;padding-left:0.28px;line-height:0;font-size:11.96px;transform:scaleX(0.97);transform-origin:0 0">2</span><span style="display:inline-block;width:7px;padding-left:0.28px;line-height:0;font-size:11.96px;transform:scaleX(0.97);transform-origin:0 0">7</span></div><div class="cb" style="top:69px;line-height:16px"><span style="font-size:13.00px;letter-spacing:0.00px;line-height:0">办公室</span></div><div class="cb" style="top:87px;line-height:16px"><span style="font-size:13.00px;letter-spacing:0.00px;line-height:0">面积</span><span style="font-size:13.00px;letter-spacing:0.00px;line-height:0;position:relative;left:-2.86px">：</span><span style="display:inline-block;width:7px;padding-left:0.28px;line-height:0;font-size:11.96px;transform:scaleX(0.97);transform-origin:0 0">2</span><span style="display:inline-block;width:7px;padding-left:0.28px;line-height:0;font-size:11.96px;transform:scaleX(0.97);transform-origin:0 0">4</span><span style="display:inline-block;width:7px;padding-left:0.28px;line-height:0;font-size:11.96px;transform:scaleX(0.97);transform-origin:0 0">0</span><span style="display:inline-block;width:7px;padding-left:1.95px;line-height:0;font-size:11.96px;transform:scaleX(0.97);transform-origin:0 0">.</span><span style="display:inline-block;width:7px;padding-left:0.28px;line-height:0;font-size:11.96px;transform:scaleX(0.97);transform-origin:0 0">0</span><span style="display:inline-block;width:7px;padding-left:0.28px;line-height:0;font-size:11.96px;transform:scaleX(0.97);transform-origin:0 0">0</span></div></div>
<div class="a card" style="left:221px;top:391px"><div class="ch"></div><div class="cn" style="left:6px"><span style="display:inline-block;width:14.5px;text-align:center">B</span><span style="display:inline-block;width:11.3px;text-align:center">1</span><span style="display:inline-block;width:11.3px;text-align:center">0</span><span style="display:inline-block;width:11.3px;text-align:center">2</span><span style="display:inline-block;width:11.3px;text-align:center">0</span></div><div class="cb" style="top:29px;line-height:20px;letter-spacing:0"><span style="font-size:16.00px;letter-spacing:1.00px;line-height:0">金城国贸大厦</span></div><div class="cb" style="top:50px;line-height:16px"><span style="font-size:13.00px;letter-spacing:0.00px;line-height:0">楼层</span><span style="font-size:13.00px;letter-spacing:0.00px;line-height:0;position:relative;left:-2.86px">：</span><span style="display:inline-block;width:7px;padding-left:0.28px;line-height:0;font-size:11.96px;transform:scaleX(0.97);transform-origin:0 0">2</span><span style="display:inline-block;width:7px;padding-left:0.28px;line-height:0;font-size:11.96px;transform:scaleX(0.97);transform-origin:0 0">0</span><span style="display:inline-block;width:7px;padding-left:1.95px;line-height:0;font-size:11.96px;transform:scaleX(0.97);transform-origin:0 0">/</span><span style="display:inline-block;width:7px;padding-left:0.28px;line-height:0;font-size:11.96px;transform:scaleX(0.97);transform-origin:0 0">2</span><span style="display:inline-block;width:7px;padding-left:0.28px;line-height:0;font-size:11.96px;transform:scaleX(0.97);transform-origin:0 0">7</span></div><div class="cb" style="top:69px;line-height:16px"><span style="font-size:13.00px;letter-spacing:0.00px;line-height:0">办公室</span></div><div class="cb" style="top:87px;line-height:16px"><span style="font-size:13.00px;letter-spacing:0.00px;line-height:0">面积</span><span style="font-size:13.00px;letter-spacing:0.00px;line-height:0;position:relative;left:-2.86px">：</span><span style="display:inline-block;width:7px;padding-left:0.28px;line-height:0;font-size:11.96px;transform:scaleX(0.97);transform-origin:0 0">2</span><span style="display:inline-block;width:7px;padding-left:0.28px;line-height:0;font-size:11.96px;transform:scaleX(0.97);transform-origin:0 0">4</span><span style="display:inline-block;width:7px;padding-left:0.28px;line-height:0;font-size:11.96px;transform:scaleX(0.97);transform-origin:0 0">0</span><span style="display:inline-block;width:7px;padding-left:1.95px;line-height:0;font-size:11.96px;transform:scaleX(0.97);transform-origin:0 0">.</span><span style="display:inline-block;width:7px;padding-left:0.28px;line-height:0;font-size:11.96px;transform:scaleX(0.97);transform-origin:0 0">0</span><span style="display:inline-block;width:7px;padding-left:0.28px;line-height:0;font-size:11.96px;transform:scaleX(0.97);transform-origin:0 0">0</span></div></div>
<div class="a card" style="left:365px;top:391px"><div class="ch"></div><div class="cn" style="left:6px"><span style="display:inline-block;width:14.5px;text-align:center">B</span><span style="display:inline-block;width:11.3px;text-align:center">1</span><span style="display:inline-block;width:11.3px;text-align:center">0</span><span style="display:inline-block;width:11.3px;text-align:center">2</span><span style="display:inline-block;width:11.3px;text-align:center">1</span></div><div class="cb" style="top:29px;line-height:20px;letter-spacing:0"><span style="font-size:16.00px;letter-spacing:1.00px;line-height:0">金城国贸大厦</span></div><div class="cb" style="top:50px;line-height:16px"><span style="font-size:13.00px;letter-spacing:0.00px;line-height:0">楼层</span><span style="font-size:13.00px;letter-spacing:0.00px;line-height:0;position:relative;left:-2.86px">：</span><span style="display:inline-block;width:7px;padding-left:0.28px;line-height:0;font-size:11.96px;transform:scaleX(0.97);transform-origin:0 0">2</span><span style="display:inline-block;width:7px;padding-left:0.28px;line-height:0;font-size:11.96px;transform:scaleX(0.97);transform-origin:0 0">0</span><span style="display:inline-block;width:7px;padding-left:1.95px;line-height:0;font-size:11.96px;transform:scaleX(0.97);transform-origin:0 0">/</span><span style="display:inline-block;width:7px;padding-left:0.28px;line-height:0;font-size:11.96px;transform:scaleX(0.97);transform-origin:0 0">2</span><span style="display:inline-block;width:7px;padding-left:0.28px;line-height:0;font-size:11.96px;transform:scaleX(0.97);transform-origin:0 0">7</span></div><div class="cb" style="top:69px;line-height:16px"><span style="font-size:13.00px;letter-spacing:0.00px;line-height:0">办公室</span></div><div class="cb" style="top:87px;line-height:16px"><span style="font-size:13.00px;letter-spacing:0.00px;line-height:0">面积</span><span style="font-size:13.00px;letter-spacing:0.00px;line-height:0;position:relative;left:-2.86px">：</span><span style="display:inline-block;width:7px;padding-left:0.28px;line-height:0;font-size:11.96px;transform:scaleX(0.97);transform-origin:0 0">2</span><span style="display:inline-block;width:7px;padding-left:0.28px;line-height:0;font-size:11.96px;transform:scaleX(0.97);transform-origin:0 0">4</span><span style="display:inline-block;width:7px;padding-left:0.28px;line-height:0;font-size:11.96px;transform:scaleX(0.97);transform-origin:0 0">0</span><span style="display:inline-block;width:7px;padding-left:1.95px;line-height:0;font-size:11.96px;transform:scaleX(0.97);transform-origin:0 0">.</span><span style="display:inline-block;width:7px;padding-left:0.28px;line-height:0;font-size:11.96px;transform:scaleX(0.97);transform-origin:0 0">0</span><span style="display:inline-block;width:7px;padding-left:0.28px;line-height:0;font-size:11.96px;transform:scaleX(0.97);transform-origin:0 0">0</span></div></div>
<div class="a card" style="left:509px;top:391px"><div class="ch"></div><div class="cn" style="left:6px"><span style="display:inline-block;width:14.5px;text-align:center">B</span><span style="display:inline-block;width:11.3px;text-align:center">1</span><span style="display:inline-block;width:11.3px;text-align:center">0</span><span style="display:inline-block;width:11.3px;text-align:center">2</span><span style="display:inline-block;width:11.3px;text-align:center">2</span></div><div class="cb" style="top:29px;line-height:20px;letter-spacing:0"><span style="font-size:16.00px;letter-spacing:1.00px;line-height:0">金城国贸大厦</span></div><div class="cb" style="top:50px;line-height:16px"><span style="font-size:13.00px;letter-spacing:0.00px;line-height:0">楼层</span><span style="font-size:13.00px;letter-spacing:0.00px;line-height:0;position:relative;left:-2.86px">：</span><span style="display:inline-block;width:7px;padding-left:0.28px;line-height:0;font-size:11.96px;transform:scaleX(0.97);transform-origin:0 0">2</span><span style="display:inline-block;width:7px;padding-left:0.28px;line-height:0;font-size:11.96px;transform:scaleX(0.97);transform-origin:0 0">0</span><span style="display:inline-block;width:7px;padding-left:1.95px;line-height:0;font-size:11.96px;transform:scaleX(0.97);transform-origin:0 0">/</span><span style="display:inline-block;width:7px;padding-left:0.28px;line-height:0;font-size:11.96px;transform:scaleX(0.97);transform-origin:0 0">2</span><span style="display:inline-block;width:7px;padding-left:0.28px;line-height:0;font-size:11.96px;transform:scaleX(0.97);transform-origin:0 0">7</span></div><div class="cb" style="top:69px;line-height:16px"><span style="font-size:13.00px;letter-spacing:0.00px;line-height:0">办公室</span></div><div class="cb" style="top:87px;line-height:16px"><span style="font-size:13.00px;letter-spacing:0.00px;line-height:0">面积</span><span style="font-size:13.00px;letter-spacing:0.00px;line-height:0;position:relative;left:-2.86px">：</span><span style="display:inline-block;width:7px;padding-left:0.28px;line-height:0;font-size:11.96px;transform:scaleX(0.97);transform-origin:0 0">2</span><span style="display:inline-block;width:7px;padding-left:0.28px;line-height:0;font-size:11.96px;transform:scaleX(0.97);transform-origin:0 0">4</span><span style="display:inline-block;width:7px;padding-left:0.28px;line-height:0;font-size:11.96px;transform:scaleX(0.97);transform-origin:0 0">0</span><span style="display:inline-block;width:7px;padding-left:1.95px;line-height:0;font-size:11.96px;transform:scaleX(0.97);transform-origin:0 0">.</span><span style="display:inline-block;width:7px;padding-left:0.28px;line-height:0;font-size:11.96px;transform:scaleX(0.97);transform-origin:0 0">0</span><span style="display:inline-block;width:7px;padding-left:0.28px;line-height:0;font-size:11.96px;transform:scaleX(0.97);transform-origin:0 0">0</span></div></div>
<div class="a card" style="left:653px;top:391px"><div class="ch"></div><div class="cn" style="left:6px"><span style="display:inline-block;width:14.5px;text-align:center">B</span><span style="display:inline-block;width:11.3px;text-align:center">1</span><span style="display:inline-block;width:11.3px;text-align:center">0</span><span style="display:inline-block;width:11.3px;text-align:center">2</span><span style="display:inline-block;width:11.3px;text-align:center">3</span></div><div class="cb" style="top:29px;line-height:20px;letter-spacing:0"><span style="font-size:16.00px;letter-spacing:1.00px;line-height:0">金城国贸大厦</span></div><div class="cb" style="top:50px;line-height:16px"><span style="font-size:13.00px;letter-spacing:0.00px;line-height:0">楼层</span><span style="font-size:13.00px;letter-spacing:0.00px;line-height:0;position:relative;left:-2.86px">：</span><span style="display:inline-block;width:7px;padding-left:0.28px;line-height:0;font-size:11.96px;transform:scaleX(0.97);transform-origin:0 0">2</span><span style="display:inline-block;width:7px;padding-left:0.28px;line-height:0;font-size:11.96px;transform:scaleX(0.97);transform-origin:0 0">0</span><span style="display:inline-block;width:7px;padding-left:1.95px;line-height:0;font-size:11.96px;transform:scaleX(0.97);transform-origin:0 0">/</span><span style="display:inline-block;width:7px;padding-left:0.28px;line-height:0;font-size:11.96px;transform:scaleX(0.97);transform-origin:0 0">2</span><span style="display:inline-block;width:7px;padding-left:0.28px;line-height:0;font-size:11.96px;transform:scaleX(0.97);transform-origin:0 0">7</span></div><div class="cb" style="top:69px;line-height:16px"><span style="font-size:13.00px;letter-spacing:0.00px;line-height:0">办公室</span></div><div class="cb" style="top:87px;line-height:16px"><span style="font-size:13.00px;letter-spacing:0.00px;line-height:0">面积</span><span style="font-size:13.00px;letter-spacing:0.00px;line-height:0;position:relative;left:-2.86px">：</span><span style="display:inline-block;width:7px;padding-left:0.28px;line-height:0;font-size:11.96px;transform:scaleX(0.97);transform-origin:0 0">2</span><span style="display:inline-block;width:7px;padding-left:0.28px;line-height:0;font-size:11.96px;transform:scaleX(0.97);transform-origin:0 0">4</span><span style="display:inline-block;width:7px;padding-left:0.28px;line-height:0;font-size:11.96px;transform:scaleX(0.97);transform-origin:0 0">0</span><span style="display:inline-block;width:7px;padding-left:1.95px;line-height:0;font-size:11.96px;transform:scaleX(0.97);transform-origin:0 0">.</span><span style="display:inline-block;width:7px;padding-left:0.28px;line-height:0;font-size:11.96px;transform:scaleX(0.97);transform-origin:0 0">0</span><span style="display:inline-block;width:7px;padding-left:0.28px;line-height:0;font-size:11.96px;transform:scaleX(0.97);transform-origin:0 0">0</span></div></div>
<div class="a card" style="left:797px;top:391px"><div class="ch"></div><div class="cn" style="left:6px"><span style="display:inline-block;width:14.5px;text-align:center">B</span><span style="display:inline-block;width:11.3px;text-align:center">1</span><span style="display:inline-block;width:11.3px;text-align:center">0</span><span style="display:inline-block;width:11.3px;text-align:center">2</span><span style="display:inline-block;width:11.3px;text-align:center">4</span></div><div class="cb" style="top:29px;line-height:20px;letter-spacing:0"><span style="font-size:16.00px;letter-spacing:1.00px;line-height:0">金城国贸大厦</span></div><div class="cb" style="top:50px;line-height:16px"><span style="font-size:13.00px;letter-spacing:0.00px;line-height:0">楼层</span><span style="font-size:13.00px;letter-spacing:0.00px;line-height:0;position:relative;left:-2.86px">：</span><span style="display:inline-block;width:7px;padding-left:0.28px;line-height:0;font-size:11.96px;transform:scaleX(0.97);transform-origin:0 0">2</span><span style="display:inline-block;width:7px;padding-left:0.28px;line-height:0;font-size:11.96px;transform:scaleX(0.97);transform-origin:0 0">0</span><span style="display:inline-block;width:7px;padding-left:1.95px;line-height:0;font-size:11.96px;transform:scaleX(0.97);transform-origin:0 0">/</span><span style="display:inline-block;width:7px;padding-left:0.28px;line-height:0;font-size:11.96px;transform:scaleX(0.97);transform-origin:0 0">2</span><span style="display:inline-block;width:7px;padding-left:0.28px;line-height:0;font-size:11.96px;transform:scaleX(0.97);transform-origin:0 0">7</span></div><div class="cb" style="top:69px;line-height:16px"><span style="font-size:13.00px;letter-spacing:0.00px;line-height:0">办公室</span></div><div class="cb" style="top:87px;line-height:16px"><span style="font-size:13.00px;letter-spacing:0.00px;line-height:0">面积</span><span style="font-size:13.00px;letter-spacing:0.00px;line-height:0;position:relative;left:-2.86px">：</span><span style="display:inline-block;width:7px;padding-left:0.28px;line-height:0;font-size:11.96px;transform:scaleX(0.97);transform-origin:0 0">2</span><span style="display:inline-block;width:7px;padding-left:0.28px;line-height:0;font-size:11.96px;transform:scaleX(0.97);transform-origin:0 0">4</span><span style="display:inline-block;width:7px;padding-left:0.28px;line-height:0;font-size:11.96px;transform:scaleX(0.97);transform-origin:0 0">0</span><span style="display:inline-block;width:7px;padding-left:1.95px;line-height:0;font-size:11.96px;transform:scaleX(0.97);transform-origin:0 0">.</span><span style="display:inline-block;width:7px;padding-left:0.28px;line-height:0;font-size:11.96px;transform:scaleX(0.97);transform-origin:0 0">0</span><span style="display:inline-block;width:7px;padding-left:0.28px;line-height:0;font-size:11.96px;transform:scaleX(0.97);transform-origin:0 0">0</span></div></div>
<div class="a card" style="left:941px;top:391px"><div class="ch"></div><div class="cn" style="left:6px"><span style="display:inline-block;width:14.5px;text-align:center">B</span><span style="display:inline-block;width:11.3px;text-align:center">1</span><span style="display:inline-block;width:11.3px;text-align:center">0</span><span style="display:inline-block;width:11.3px;text-align:center">2</span><span style="display:inline-block;width:11.3px;text-align:center">5</span></div><div class="cb" style="top:29px;line-height:20px;letter-spacing:0"><span style="font-size:16.00px;letter-spacing:1.00px;line-height:0">金城国贸大厦</span></div><div class="cb" style="top:50px;line-height:16px"><span style="font-size:13.00px;letter-spacing:0.00px;line-height:0">楼层</span><span style="font-size:13.00px;letter-spacing:0.00px;line-height:0;position:relative;left:-2.86px">：</span><span style="display:inline-block;width:7px;padding-left:0.28px;line-height:0;font-size:11.96px;transform:scaleX(0.97);transform-origin:0 0">2</span><span style="display:inline-block;width:7px;padding-left:0.28px;line-height:0;font-size:11.96px;transform:scaleX(0.97);transform-origin:0 0">0</span><span style="display:inline-block;width:7px;padding-left:1.95px;line-height:0;font-size:11.96px;transform:scaleX(0.97);transform-origin:0 0">/</span><span style="display:inline-block;width:7px;padding-left:0.28px;line-height:0;font-size:11.96px;transform:scaleX(0.97);transform-origin:0 0">2</span><span style="display:inline-block;width:7px;padding-left:0.28px;line-height:0;font-size:11.96px;transform:scaleX(0.97);transform-origin:0 0">7</span></div><div class="cb" style="top:69px;line-height:16px"><span style="font-size:13.00px;letter-spacing:0.00px;line-height:0">办公室</span></div><div class="cb" style="top:87px;line-height:16px"><span style="font-size:13.00px;letter-spacing:0.00px;line-height:0">面积</span><span style="font-size:13.00px;letter-spacing:0.00px;line-height:0;position:relative;left:-2.86px">：</span><span style="display:inline-block;width:7px;padding-left:0.28px;line-height:0;font-size:11.96px;transform:scaleX(0.97);transform-origin:0 0">2</span><span style="display:inline-block;width:7px;padding-left:0.28px;line-height:0;font-size:11.96px;transform:scaleX(0.97);transform-origin:0 0">4</span><span style="display:inline-block;width:7px;padding-left:0.28px;line-height:0;font-size:11.96px;transform:scaleX(0.97);transform-origin:0 0">0</span><span style="display:inline-block;width:7px;padding-left:1.95px;line-height:0;font-size:11.96px;transform:scaleX(0.97);transform-origin:0 0">.</span><span style="display:inline-block;width:7px;padding-left:0.28px;line-height:0;font-size:11.96px;transform:scaleX(0.97);transform-origin:0 0">0</span><span style="display:inline-block;width:7px;padding-left:0.28px;line-height:0;font-size:11.96px;transform:scaleX(0.97);transform-origin:0 0">0</span></div></div>
<div class="a card" style="left:221px;top:535px"><div class="ch"></div><div class="cn" style="left:6px"><span style="display:inline-block;width:14.5px;text-align:center">B</span><span style="display:inline-block;width:11.3px;text-align:center">1</span><span style="display:inline-block;width:11.3px;text-align:center">0</span><span style="display:inline-block;width:11.3px;text-align:center">3</span><span style="display:inline-block;width:11.3px;text-align:center">0</span></div><div class="cb" style="top:29px;line-height:20px;letter-spacing:0"><span style="font-size:16.00px;letter-spacing:1.00px;line-height:0">金城国贸大厦</span></div><div class="cb" style="top:50px;line-height:16px"><span style="font-size:13.00px;letter-spacing:0.00px;line-height:0">楼层</span><span style="font-size:13.00px;letter-spacing:0.00px;line-height:0;position:relative;left:-2.86px">：</span><span style="display:inline-block;width:7px;padding-left:0.28px;line-height:0;font-size:11.96px;transform:scaleX(0.97);transform-origin:0 0">2</span><span style="display:inline-block;width:7px;padding-left:0.28px;line-height:0;font-size:11.96px;transform:scaleX(0.97);transform-origin:0 0">0</span><span style="display:inline-block;width:7px;padding-left:1.95px;line-height:0;font-size:11.96px;transform:scaleX(0.97);transform-origin:0 0">/</span><span style="display:inline-block;width:7px;padding-left:0.28px;line-height:0;font-size:11.96px;transform:scaleX(0.97);transform-origin:0 0">2</span><span style="display:inline-block;width:7px;padding-left:0.28px;line-height:0;font-size:11.96px;transform:scaleX(0.97);transform-origin:0 0">7</span></div><div class="cb" style="top:69px;line-height:16px"><span style="font-size:13.00px;letter-spacing:0.00px;line-height:0">办公室</span></div><div class="cb" style="top:87px;line-height:16px"><span style="font-size:13.00px;letter-spacing:0.00px;line-height:0">面积</span><span style="font-size:13.00px;letter-spacing:0.00px;line-height:0;position:relative;left:-2.86px">：</span><span style="display:inline-block;width:7px;padding-left:0.28px;line-height:0;font-size:11.96px;transform:scaleX(0.97);transform-origin:0 0">2</span><span style="display:inline-block;width:7px;padding-left:0.28px;line-height:0;font-size:11.96px;transform:scaleX(0.97);transform-origin:0 0">4</span><span style="display:inline-block;width:7px;padding-left:0.28px;line-height:0;font-size:11.96px;transform:scaleX(0.97);transform-origin:0 0">0</span><span style="display:inline-block;width:7px;padding-left:1.95px;line-height:0;font-size:11.96px;transform:scaleX(0.97);transform-origin:0 0">.</span><span style="display:inline-block;width:7px;padding-left:0.28px;line-height:0;font-size:11.96px;transform:scaleX(0.97);transform-origin:0 0">0</span><span style="display:inline-block;width:7px;padding-left:0.28px;line-height:0;font-size:11.96px;transform:scaleX(0.97);transform-origin:0 0">0</span></div></div>
<div class="a card" style="left:365px;top:535px"><div class="ch"></div><div class="cn" style="left:6px"><span style="display:inline-block;width:14.5px;text-align:center">B</span><span style="display:inline-block;width:11.3px;text-align:center">1</span><span style="display:inline-block;width:11.3px;text-align:center">0</span><span style="display:inline-block;width:11.3px;text-align:center">3</span><span style="display:inline-block;width:11.3px;text-align:center">1</span></div><div class="cb" style="top:29px;line-height:20px;letter-spacing:0"><span style="font-size:16.00px;letter-spacing:1.00px;line-height:0">金城国贸大厦</span></div><div class="cb" style="top:50px;line-height:16px"><span style="font-size:13.00px;letter-spacing:0.00px;line-height:0">楼层</span><span style="font-size:13.00px;letter-spacing:0.00px;line-height:0;position:relative;left:-2.86px">：</span><span style="display:inline-block;width:7px;padding-left:0.28px;line-height:0;font-size:11.96px;transform:scaleX(0.97);transform-origin:0 0">2</span><span style="display:inline-block;width:7px;padding-left:0.28px;line-height:0;font-size:11.96px;transform:scaleX(0.97);transform-origin:0 0">0</span><span style="display:inline-block;width:7px;padding-left:1.95px;line-height:0;font-size:11.96px;transform:scaleX(0.97);transform-origin:0 0">/</span><span style="display:inline-block;width:7px;padding-left:0.28px;line-height:0;font-size:11.96px;transform:scaleX(0.97);transform-origin:0 0">2</span><span style="display:inline-block;width:7px;padding-left:0.28px;line-height:0;font-size:11.96px;transform:scaleX(0.97);transform-origin:0 0">7</span></div><div class="cb" style="top:69px;line-height:16px"><span style="font-size:13.00px;letter-spacing:0.00px;line-height:0">办公室</span></div><div class="cb" style="top:87px;line-height:16px"><span style="font-size:13.00px;letter-spacing:0.00px;line-height:0">面积</span><span style="font-size:13.00px;letter-spacing:0.00px;line-height:0;position:relative;left:-2.86px">：</span><span style="display:inline-block;width:7px;padding-left:0.28px;line-height:0;font-size:11.96px;transform:scaleX(0.97);transform-origin:0 0">2</span><span style="display:inline-block;width:7px;padding-left:0.28px;line-height:0;font-size:11.96px;transform:scaleX(0.97);transform-origin:0 0">4</span><span style="display:inline-block;width:7px;padding-left:0.28px;line-height:0;font-size:11.96px;transform:scaleX(0.97);transform-origin:0 0">0</span><span style="display:inline-block;width:7px;padding-left:1.95px;line-height:0;font-size:11.96px;transform:scaleX(0.97);transform-origin:0 0">.</span><span style="display:inline-block;width:7px;padding-left:0.28px;line-height:0;font-size:11.96px;transform:scaleX(0.97);transform-origin:0 0">0</span><span style="display:inline-block;width:7px;padding-left:0.28px;line-height:0;font-size:11.96px;transform:scaleX(0.97);transform-origin:0 0">0</span></div></div>
<div class="a card" style="left:509px;top:535px"><div class="ch"></div><div class="cn" style="left:6px"><span style="display:inline-block;width:14.5px;text-align:center">B</span><span style="display:inline-block;width:11.3px;text-align:center">1</span><span style="display:inline-block;width:11.3px;text-align:center">0</span><span style="display:inline-block;width:11.3px;text-align:center">3</span><span style="display:inline-block;width:11.3px;text-align:center">2</span></div><div class="cb" style="top:29px;line-height:20px;letter-spacing:0"><span style="font-size:16.00px;letter-spacing:1.00px;line-height:0">金城国贸大厦</span></div><div class="cb" style="top:50px;line-height:16px"><span style="font-size:13.00px;letter-spacing:0.00px;line-height:0">楼层</span><span style="font-size:13.00px;letter-spacing:0.00px;line-height:0;position:relative;left:-2.86px">：</span><span style="display:inline-block;width:7px;padding-left:0.28px;line-height:0;font-size:11.96px;transform:scaleX(0.97);transform-origin:0 0">2</span><span style="display:inline-block;width:7px;padding-left:0.28px;line-height:0;font-size:11.96px;transform:scaleX(0.97);transform-origin:0 0">0</span><span style="display:inline-block;width:7px;padding-left:1.95px;line-height:0;font-size:11.96px;transform:scaleX(0.97);transform-origin:0 0">/</span><span style="display:inline-block;width:7px;padding-left:0.28px;line-height:0;font-size:11.96px;transform:scaleX(0.97);transform-origin:0 0">2</span><span style="display:inline-block;width:7px;padding-left:0.28px;line-height:0;font-size:11.96px;transform:scaleX(0.97);transform-origin:0 0">7</span></div><div class="cb" style="top:69px;line-height:16px"><span style="font-size:13.00px;letter-spacing:0.00px;line-height:0">办公室</span></div><div class="cb" style="top:87px;line-height:16px"><span style="font-size:13.00px;letter-spacing:0.00px;line-height:0">面积</span><span style="font-size:13.00px;letter-spacing:0.00px;line-height:0;position:relative;left:-2.86px">：</span><span style="display:inline-block;width:7px;padding-left:0.28px;line-height:0;font-size:11.96px;transform:scaleX(0.97);transform-origin:0 0">2</span><span style="display:inline-block;width:7px;padding-left:0.28px;line-height:0;font-size:11.96px;transform:scaleX(0.97);transform-origin:0 0">4</span><span style="display:inline-block;width:7px;padding-left:0.28px;line-height:0;font-size:11.96px;transform:scaleX(0.97);transform-origin:0 0">0</span><span style="display:inline-block;width:7px;padding-left:1.95px;line-height:0;font-size:11.96px;transform:scaleX(0.97);transform-origin:0 0">.</span><span style="display:inline-block;width:7px;padding-left:0.28px;line-height:0;font-size:11.96px;transform:scaleX(0.97);transform-origin:0 0">0</span><span style="display:inline-block;width:7px;padding-left:0.28px;line-height:0;font-size:11.96px;transform:scaleX(0.97);transform-origin:0 0">0</span></div></div>
<div class="a card" style="left:653px;top:535px"><div class="ch"></div><div class="cn" style="left:6px"><span style="display:inline-block;width:14.5px;text-align:center">B</span><span style="display:inline-block;width:11.3px;text-align:center">1</span><span style="display:inline-block;width:11.3px;text-align:center">0</span><span style="display:inline-block;width:11.3px;text-align:center">3</span><span style="display:inline-block;width:11.3px;text-align:center">3</span></div><div class="cb" style="top:29px;line-height:20px;letter-spacing:0"><span style="font-size:16.00px;letter-spacing:1.00px;line-height:0">金城国贸大厦</span></div><div class="cb" style="top:50px;line-height:16px"><span style="font-size:13.00px;letter-spacing:0.00px;line-height:0">楼层</span><span style="font-size:13.00px;letter-spacing:0.00px;line-height:0;position:relative;left:-2.86px">：</span><span style="display:inline-block;width:7px;padding-left:0.28px;line-height:0;font-size:11.96px;transform:scaleX(0.97);transform-origin:0 0">2</span><span style="display:inline-block;width:7px;padding-left:0.28px;line-height:0;font-size:11.96px;transform:scaleX(0.97);transform-origin:0 0">0</span><span style="display:inline-block;width:7px;padding-left:1.95px;line-height:0;font-size:11.96px;transform:scaleX(0.97);transform-origin:0 0">/</span><span style="display:inline-block;width:7px;padding-left:0.28px;line-height:0;font-size:11.96px;transform:scaleX(0.97);transform-origin:0 0">2</span><span style="display:inline-block;width:7px;padding-left:0.28px;line-height:0;font-size:11.96px;transform:scaleX(0.97);transform-origin:0 0">7</span></div><div class="cb" style="top:69px;line-height:16px"><span style="font-size:13.00px;letter-spacing:0.00px;line-height:0">办公室</span></div><div class="cb" style="top:87px;line-height:16px"><span style="font-size:13.00px;letter-spacing:0.00px;line-height:0">面积</span><span style="font-size:13.00px;letter-spacing:0.00px;line-height:0;position:relative;left:-2.86px">：</span><span style="display:inline-block;width:7px;padding-left:0.28px;line-height:0;font-size:11.96px;transform:scaleX(0.97);transform-origin:0 0">2</span><span style="display:inline-block;width:7px;padding-left:0.28px;line-height:0;font-size:11.96px;transform:scaleX(0.97);transform-origin:0 0">4</span><span style="display:inline-block;width:7px;padding-left:0.28px;line-height:0;font-size:11.96px;transform:scaleX(0.97);transform-origin:0 0">0</span><span style="display:inline-block;width:7px;padding-left:1.95px;line-height:0;font-size:11.96px;transform:scaleX(0.97);transform-origin:0 0">.</span><span style="display:inline-block;width:7px;padding-left:0.28px;line-height:0;font-size:11.96px;transform:scaleX(0.97);transform-origin:0 0">0</span><span style="display:inline-block;width:7px;padding-left:0.28px;line-height:0;font-size:11.96px;transform:scaleX(0.97);transform-origin:0 0">0</span></div></div>
<div class="a card" style="left:797px;top:535px"><div class="ch"></div><div class="cn" style="left:6px"><span style="display:inline-block;width:14.5px;text-align:center">B</span><span style="display:inline-block;width:11.3px;text-align:center">1</span><span style="display:inline-block;width:11.3px;text-align:center">0</span><span style="display:inline-block;width:11.3px;text-align:center">3</span><span style="display:inline-block;width:11.3px;text-align:center">4</span></div><div class="cb" style="top:29px;line-height:20px;letter-spacing:0"><span style="font-size:16.00px;letter-spacing:1.00px;line-height:0">金城国贸大厦</span></div><div class="cb" style="top:50px;line-height:16px"><span style="font-size:13.00px;letter-spacing:0.00px;line-height:0">楼层</span><span style="font-size:13.00px;letter-spacing:0.00px;line-height:0;position:relative;left:-2.86px">：</span><span style="display:inline-block;width:7px;padding-left:0.28px;line-height:0;font-size:11.96px;transform:scaleX(0.97);transform-origin:0 0">2</span><span style="display:inline-block;width:7px;padding-left:0.28px;line-height:0;font-size:11.96px;transform:scaleX(0.97);transform-origin:0 0">0</span><span style="display:inline-block;width:7px;padding-left:1.95px;line-height:0;font-size:11.96px;transform:scaleX(0.97);transform-origin:0 0">/</span><span style="display:inline-block;width:7px;padding-left:0.28px;line-height:0;font-size:11.96px;transform:scaleX(0.97);transform-origin:0 0">2</span><span style="display:inline-block;width:7px;padding-left:0.28px;line-height:0;font-size:11.96px;transform:scaleX(0.97);transform-origin:0 0">7</span></div><div class="cb" style="top:69px;line-height:16px"><span style="font-size:13.00px;letter-spacing:0.00px;line-height:0">办公室</span></div><div class="cb" style="top:87px;line-height:16px"><span style="font-size:13.00px;letter-spacing:0.00px;line-height:0">面积</span><span style="font-size:13.00px;letter-spacing:0.00px;line-height:0;position:relative;left:-2.86px">：</span><span style="display:inline-block;width:7px;padding-left:0.28px;line-height:0;font-size:11.96px;transform:scaleX(0.97);transform-origin:0 0">2</span><span style="display:inline-block;width:7px;padding-left:0.28px;line-height:0;font-size:11.96px;transform:scaleX(0.97);transform-origin:0 0">4</span><span style="display:inline-block;width:7px;padding-left:0.28px;line-height:0;font-size:11.96px;transform:scaleX(0.97);transform-origin:0 0">0</span><span style="display:inline-block;width:7px;padding-left:1.95px;line-height:0;font-size:11.96px;transform:scaleX(0.97);transform-origin:0 0">.</span><span style="display:inline-block;width:7px;padding-left:0.28px;line-height:0;font-size:11.96px;transform:scaleX(0.97);transform-origin:0 0">0</span><span style="display:inline-block;width:7px;padding-left:0.28px;line-height:0;font-size:11.96px;transform:scaleX(0.97);transform-origin:0 0">0</span></div></div>
<div class="a card" style="left:941px;top:535px"><div class="ch"></div><div class="cn" style="left:6px"><span style="display:inline-block;width:14.5px;text-align:center">B</span><span style="display:inline-block;width:11.3px;text-align:center">1</span><span style="display:inline-block;width:11.3px;text-align:center">0</span><span style="display:inline-block;width:11.3px;text-align:center">3</span><span style="display:inline-block;width:11.3px;text-align:center">5</span></div><div class="cb" style="top:29px;line-height:20px;letter-spacing:0"><span style="font-size:16.00px;letter-spacing:1.00px;line-height:0">金城国贸大厦</span></div><div class="cb" style="top:50px;line-height:16px"><span style="font-size:13.00px;letter-spacing:0.00px;line-height:0">楼层</span><span style="font-size:13.00px;letter-spacing:0.00px;line-height:0;position:relative;left:-2.86px">：</span><span style="display:inline-block;width:7px;padding-left:0.28px;line-height:0;font-size:11.96px;transform:scaleX(0.97);transform-origin:0 0">2</span><span style="display:inline-block;width:7px;padding-left:0.28px;line-height:0;font-size:11.96px;transform:scaleX(0.97);transform-origin:0 0">0</span><span style="display:inline-block;width:7px;padding-left:1.95px;line-height:0;font-size:11.96px;transform:scaleX(0.97);transform-origin:0 0">/</span><span style="display:inline-block;width:7px;padding-left:0.28px;line-height:0;font-size:11.96px;transform:scaleX(0.97);transform-origin:0 0">2</span><span style="display:inline-block;width:7px;padding-left:0.28px;line-height:0;font-size:11.96px;transform:scaleX(0.97);transform-origin:0 0">7</span></div><div class="cb" style="top:69px;line-height:16px"><span style="font-size:13.00px;letter-spacing:0.00px;line-height:0">办公室</span></div><div class="cb" style="top:87px;line-height:16px"><span style="font-size:13.00px;letter-spacing:0.00px;line-height:0">面积</span><span style="font-size:13.00px;letter-spacing:0.00px;line-height:0;position:relative;left:-2.86px">：</span><span style="display:inline-block;width:7px;padding-left:0.28px;line-height:0;font-size:11.96px;transform:scaleX(0.97);transform-origin:0 0">2</span><span style="display:inline-block;width:7px;padding-left:0.28px;line-height:0;font-size:11.96px;transform:scaleX(0.97);transform-origin:0 0">4</span><span style="display:inline-block;width:7px;padding-left:0.28px;line-height:0;font-size:11.96px;transform:scaleX(0.97);transform-origin:0 0">0</span><span style="display:inline-block;width:7px;padding-left:1.95px;line-height:0;font-size:11.96px;transform:scaleX(0.97);transform-origin:0 0">.</span><span style="display:inline-block;width:7px;padding-left:0.28px;line-height:0;font-size:11.96px;transform:scaleX(0.97);transform-origin:0 0">0</span><span style="display:inline-block;width:7px;padding-left:0.28px;line-height:0;font-size:11.96px;transform:scaleX(0.97);transform-origin:0 0">0</span></div></div>
<div class="a card" style="left:221px;top:679px"><div class="ch"></div><div class="cn" style="left:6px"><span style="display:inline-block;width:14.5px;text-align:center">B</span><span style="display:inline-block;width:11.3px;text-align:center">1</span><span style="display:inline-block;width:11.3px;text-align:center">0</span><span style="display:inline-block;width:11.3px;text-align:center">4</span><span style="display:inline-block;width:11.3px;text-align:center">0</span></div><div class="cb" style="top:29px;line-height:20px;letter-spacing:0"><span style="font-size:16.00px;letter-spacing:1.00px;line-height:0">金城国贸大厦</span></div><div class="cb" style="top:50px;line-height:16px"><span style="font-size:13.00px;letter-spacing:0.00px;line-height:0">楼层</span><span style="font-size:13.00px;letter-spacing:0.00px;line-height:0;position:relative;left:-2.86px">：</span><span style="display:inline-block;width:7px;padding-left:0.28px;line-height:0;font-size:11.96px;transform:scaleX(0.97);transform-origin:0 0">2</span><span style="display:inline-block;width:7px;padding-left:0.28px;line-height:0;font-size:11.96px;transform:scaleX(0.97);transform-origin:0 0">0</span><span style="display:inline-block;width:7px;padding-left:1.95px;line-height:0;font-size:11.96px;transform:scaleX(0.97);transform-origin:0 0">/</span><span style="display:inline-block;width:7px;padding-left:0.28px;line-height:0;font-size:11.96px;transform:scaleX(0.97);transform-origin:0 0">2</span><span style="display:inline-block;width:7px;padding-left:0.28px;line-height:0;font-size:11.96px;transform:scaleX(0.97);transform-origin:0 0">7</span></div><div class="cb" style="top:69px;line-height:16px"><span style="font-size:13.00px;letter-spacing:0.00px;line-height:0">办公室</span></div><div class="cb" style="top:87px;line-height:16px"><span style="font-size:13.00px;letter-spacing:0.00px;line-height:0">面积</span><span style="font-size:13.00px;letter-spacing:0.00px;line-height:0;position:relative;left:-2.86px">：</span><span style="display:inline-block;width:7px;padding-left:0.28px;line-height:0;font-size:11.96px;transform:scaleX(0.97);transform-origin:0 0">2</span><span style="display:inline-block;width:7px;padding-left:0.28px;line-height:0;font-size:11.96px;transform:scaleX(0.97);transform-origin:0 0">4</span><span style="display:inline-block;width:7px;padding-left:0.28px;line-height:0;font-size:11.96px;transform:scaleX(0.97);transform-origin:0 0">0</span><span style="display:inline-block;width:7px;padding-left:1.95px;line-height:0;font-size:11.96px;transform:scaleX(0.97);transform-origin:0 0">.</span><span style="display:inline-block;width:7px;padding-left:0.28px;line-height:0;font-size:11.96px;transform:scaleX(0.97);transform-origin:0 0">0</span><span style="display:inline-block;width:7px;padding-left:0.28px;line-height:0;font-size:11.96px;transform:scaleX(0.97);transform-origin:0 0">0</span></div></div>
<div class="a card" style="left:365px;top:679px"><div class="ch"></div><div class="cn" style="left:6px"><span style="display:inline-block;width:14.5px;text-align:center">B</span><span style="display:inline-block;width:11.3px;text-align:center">1</span><span style="display:inline-block;width:11.3px;text-align:center">0</span><span style="display:inline-block;width:11.3px;text-align:center">4</span><span style="display:inline-block;width:11.3px;text-align:center">1</span></div><div class="cb" style="top:29px;line-height:20px;letter-spacing:0"><span style="font-size:16.00px;letter-spacing:1.00px;line-height:0">金城国贸大厦</span></div><div class="cb" style="top:50px;line-height:16px"><span style="font-size:13.00px;letter-spacing:0.00px;line-height:0">楼层</span><span style="font-size:13.00px;letter-spacing:0.00px;line-height:0;position:relative;left:-2.86px">：</span><span style="display:inline-block;width:7px;padding-left:0.28px;line-height:0;font-size:11.96px;transform:scaleX(0.97);transform-origin:0 0">2</span><span style="display:inline-block;width:7px;padding-left:0.28px;line-height:0;font-size:11.96px;transform:scaleX(0.97);transform-origin:0 0">0</span><span style="display:inline-block;width:7px;padding-left:1.95px;line-height:0;font-size:11.96px;transform:scaleX(0.97);transform-origin:0 0">/</span><span style="display:inline-block;width:7px;padding-left:0.28px;line-height:0;font-size:11.96px;transform:scaleX(0.97);transform-origin:0 0">2</span><span style="display:inline-block;width:7px;padding-left:0.28px;line-height:0;font-size:11.96px;transform:scaleX(0.97);transform-origin:0 0">7</span></div><div class="cb" style="top:69px;line-height:16px"><span style="font-size:13.00px;letter-spacing:0.00px;line-height:0">办公室</span></div><div class="cb" style="top:87px;line-height:16px"><span style="font-size:13.00px;letter-spacing:0.00px;line-height:0">面积</span><span style="font-size:13.00px;letter-spacing:0.00px;line-height:0;position:relative;left:-2.86px">：</span><span style="display:inline-block;width:7px;padding-left:0.28px;line-height:0;font-size:11.96px;transform:scaleX(0.97);transform-origin:0 0">2</span><span style="display:inline-block;width:7px;padding-left:0.28px;line-height:0;font-size:11.96px;transform:scaleX(0.97);transform-origin:0 0">4</span><span style="display:inline-block;width:7px;padding-left:0.28px;line-height:0;font-size:11.96px;transform:scaleX(0.97);transform-origin:0 0">0</span><span style="display:inline-block;width:7px;padding-left:1.95px;line-height:0;font-size:11.96px;transform:scaleX(0.97);transform-origin:0 0">.</span><span style="display:inline-block;width:7px;padding-left:0.28px;line-height:0;font-size:11.96px;transform:scaleX(0.97);transform-origin:0 0">0</span><span style="display:inline-block;width:7px;padding-left:0.28px;line-height:0;font-size:11.96px;transform:scaleX(0.97);transform-origin:0 0">0</span></div></div>
<div class="a card" style="left:509px;top:679px"><div class="ch"></div><div class="cn" style="left:6px"><span style="display:inline-block;width:14.5px;text-align:center">B</span><span style="display:inline-block;width:11.3px;text-align:center">1</span><span style="display:inline-block;width:11.3px;text-align:center">0</span><span style="display:inline-block;width:11.3px;text-align:center">4</span><span style="display:inline-block;width:11.3px;text-align:center">2</span></div><div class="cb" style="top:29px;line-height:20px;letter-spacing:0"><span style="font-size:16.00px;letter-spacing:1.00px;line-height:0">金城国贸大厦</span></div><div class="cb" style="top:50px;line-height:16px"><span style="font-size:13.00px;letter-spacing:0.00px;line-height:0">楼层</span><span style="font-size:13.00px;letter-spacing:0.00px;line-height:0;position:relative;left:-2.86px">：</span><span style="display:inline-block;width:7px;padding-left:0.28px;line-height:0;font-size:11.96px;transform:scaleX(0.97);transform-origin:0 0">2</span><span style="display:inline-block;width:7px;padding-left:0.28px;line-height:0;font-size:11.96px;transform:scaleX(0.97);transform-origin:0 0">0</span><span style="display:inline-block;width:7px;padding-left:1.95px;line-height:0;font-size:11.96px;transform:scaleX(0.97);transform-origin:0 0">/</span><span style="display:inline-block;width:7px;padding-left:0.28px;line-height:0;font-size:11.96px;transform:scaleX(0.97);transform-origin:0 0">2</span><span style="display:inline-block;width:7px;padding-left:0.28px;line-height:0;font-size:11.96px;transform:scaleX(0.97);transform-origin:0 0">7</span></div><div class="cb" style="top:69px;line-height:16px"><span style="font-size:13.00px;letter-spacing:0.00px;line-height:0">办公室</span></div><div class="cb" style="top:87px;line-height:16px"><span style="font-size:13.00px;letter-spacing:0.00px;line-height:0">面积</span><span style="font-size:13.00px;letter-spacing:0.00px;line-height:0;position:relative;left:-2.86px">：</span><span style="display:inline-block;width:7px;padding-left:0.28px;line-height:0;font-size:11.96px;transform:scaleX(0.97);transform-origin:0 0">2</span><span style="display:inline-block;width:7px;padding-left:0.28px;line-height:0;font-size:11.96px;transform:scaleX(0.97);transform-origin:0 0">4</span><span style="display:inline-block;width:7px;padding-left:0.28px;line-height:0;font-size:11.96px;transform:scaleX(0.97);transform-origin:0 0">0</span><span style="display:inline-block;width:7px;padding-left:1.95px;line-height:0;font-size:11.96px;transform:scaleX(0.97);transform-origin:0 0">.</span><span style="display:inline-block;width:7px;padding-left:0.28px;line-height:0;font-size:11.96px;transform:scaleX(0.97);transform-origin:0 0">0</span><span style="display:inline-block;width:7px;padding-left:0.28px;line-height:0;font-size:11.96px;transform:scaleX(0.97);transform-origin:0 0">0</span></div></div>
<div class="a card" style="left:653px;top:679px"><div class="ch"></div><div class="cn" style="left:6px"><span style="display:inline-block;width:14.5px;text-align:center">B</span><span style="display:inline-block;width:11.3px;text-align:center">1</span><span style="display:inline-block;width:11.3px;text-align:center">0</span><span style="display:inline-block;width:11.3px;text-align:center">4</span><span style="display:inline-block;width:11.3px;text-align:center">3</span></div><div class="cb" style="top:29px;line-height:20px;letter-spacing:0"><span style="font-size:16.00px;letter-spacing:1.00px;line-height:0">金城国贸大厦</span></div><div class="cb" style="top:50px;line-height:16px"><span style="font-size:13.00px;letter-spacing:0.00px;line-height:0">楼层</span><span style="font-size:13.00px;letter-spacing:0.00px;line-height:0;position:relative;left:-2.86px">：</span><span style="display:inline-block;width:7px;padding-left:0.28px;line-height:0;font-size:11.96px;transform:scaleX(0.97);transform-origin:0 0">2</span><span style="display:inline-block;width:7px;padding-left:0.28px;line-height:0;font-size:11.96px;transform:scaleX(0.97);transform-origin:0 0">0</span><span style="display:inline-block;width:7px;padding-left:1.95px;line-height:0;font-size:11.96px;transform:scaleX(0.97);transform-origin:0 0">/</span><span style="display:inline-block;width:7px;padding-left:0.28px;line-height:0;font-size:11.96px;transform:scaleX(0.97);transform-origin:0 0">2</span><span style="display:inline-block;width:7px;padding-left:0.28px;line-height:0;font-size:11.96px;transform:scaleX(0.97);transform-origin:0 0">7</span></div><div class="cb" style="top:69px;line-height:16px"><span style="font-size:13.00px;letter-spacing:0.00px;line-height:0">办公室</span></div><div class="cb" style="top:87px;line-height:16px"><span style="font-size:13.00px;letter-spacing:0.00px;line-height:0">面积</span><span style="font-size:13.00px;letter-spacing:0.00px;line-height:0;position:relative;left:-2.86px">：</span><span style="display:inline-block;width:7px;padding-left:0.28px;line-height:0;font-size:11.96px;transform:scaleX(0.97);transform-origin:0 0">2</span><span style="display:inline-block;width:7px;padding-left:0.28px;line-height:0;font-size:11.96px;transform:scaleX(0.97);transform-origin:0 0">4</span><span style="display:inline-block;width:7px;padding-left:0.28px;line-height:0;font-size:11.96px;transform:scaleX(0.97);transform-origin:0 0">0</span><span style="display:inline-block;width:7px;padding-left:1.95px;line-height:0;font-size:11.96px;transform:scaleX(0.97);transform-origin:0 0">.</span><span style="display:inline-block;width:7px;padding-left:0.28px;line-height:0;font-size:11.96px;transform:scaleX(0.97);transform-origin:0 0">0</span><span style="display:inline-block;width:7px;padding-left:0.28px;line-height:0;font-size:11.96px;transform:scaleX(0.97);transform-origin:0 0">0</span></div></div>
<div class="a card" style="left:797px;top:679px"><div class="ch"></div><div class="cn" style="left:6px"><span style="display:inline-block;width:14.5px;text-align:center">B</span><span style="display:inline-block;width:11.3px;text-align:center">1</span><span style="display:inline-block;width:11.3px;text-align:center">0</span><span style="display:inline-block;width:11.3px;text-align:center">4</span><span style="display:inline-block;width:11.3px;text-align:center">4</span></div><div class="cb" style="top:29px;line-height:20px;letter-spacing:0"><span style="font-size:16.00px;letter-spacing:1.00px;line-height:0">金城国贸大厦</span></div><div class="cb" style="top:50px;line-height:16px"><span style="font-size:13.00px;letter-spacing:0.00px;line-height:0">楼层</span><span style="font-size:13.00px;letter-spacing:0.00px;line-height:0;position:relative;left:-2.86px">：</span><span style="display:inline-block;width:7px;padding-left:0.28px;line-height:0;font-size:11.96px;transform:scaleX(0.97);transform-origin:0 0">2</span><span style="display:inline-block;width:7px;padding-left:0.28px;line-height:0;font-size:11.96px;transform:scaleX(0.97);transform-origin:0 0">0</span><span style="display:inline-block;width:7px;padding-left:1.95px;line-height:0;font-size:11.96px;transform:scaleX(0.97);transform-origin:0 0">/</span><span style="display:inline-block;width:7px;padding-left:0.28px;line-height:0;font-size:11.96px;transform:scaleX(0.97);transform-origin:0 0">2</span><span style="display:inline-block;width:7px;padding-left:0.28px;line-height:0;font-size:11.96px;transform:scaleX(0.97);transform-origin:0 0">7</span></div><div class="cb" style="top:69px;line-height:16px"><span style="font-size:13.00px;letter-spacing:0.00px;line-height:0">办公室</span></div><div class="cb" style="top:87px;line-height:16px"><span style="font-size:13.00px;letter-spacing:0.00px;line-height:0">面积</span><span style="font-size:13.00px;letter-spacing:0.00px;line-height:0;position:relative;left:-2.86px">：</span><span style="display:inline-block;width:7px;padding-left:0.28px;line-height:0;font-size:11.96px;transform:scaleX(0.97);transform-origin:0 0">2</span><span style="display:inline-block;width:7px;padding-left:0.28px;line-height:0;font-size:11.96px;transform:scaleX(0.97);transform-origin:0 0">4</span><span style="display:inline-block;width:7px;padding-left:0.28px;line-height:0;font-size:11.96px;transform:scaleX(0.97);transform-origin:0 0">0</span><span style="display:inline-block;width:7px;padding-left:1.95px;line-height:0;font-size:11.96px;transform:scaleX(0.97);transform-origin:0 0">.</span><span style="display:inline-block;width:7px;padding-left:0.28px;line-height:0;font-size:11.96px;transform:scaleX(0.97);transform-origin:0 0">0</span><span style="display:inline-block;width:7px;padding-left:0.28px;line-height:0;font-size:11.96px;transform:scaleX(0.97);transform-origin:0 0">0</span></div></div>
<div class="a card" style="left:941px;top:679px"><div class="ch"></div><div class="cn" style="left:6px"><span style="display:inline-block;width:14.5px;text-align:center">B</span><span style="display:inline-block;width:11.3px;text-align:center">1</span><span style="display:inline-block;width:11.3px;text-align:center">0</span><span style="display:inline-block;width:11.3px;text-align:center">4</span><span style="display:inline-block;width:11.3px;text-align:center">5</span></div><div class="cb" style="top:29px;line-height:20px;letter-spacing:0"><span style="font-size:16.00px;letter-spacing:1.00px;line-height:0">金城国贸大厦</span></div><div class="cb" style="top:50px;line-height:16px"><span style="font-size:13.00px;letter-spacing:0.00px;line-height:0">楼层</span><span style="font-size:13.00px;letter-spacing:0.00px;line-height:0;position:relative;left:-2.86px">：</span><span style="display:inline-block;width:7px;padding-left:0.28px;line-height:0;font-size:11.96px;transform:scaleX(0.97);transform-origin:0 0">2</span><span style="display:inline-block;width:7px;padding-left:0.28px;line-height:0;font-size:11.96px;transform:scaleX(0.97);transform-origin:0 0">0</span><span style="display:inline-block;width:7px;padding-left:1.95px;line-height:0;font-size:11.96px;transform:scaleX(0.97);transform-origin:0 0">/</span><span style="display:inline-block;width:7px;padding-left:0.28px;line-height:0;font-size:11.96px;transform:scaleX(0.97);transform-origin:0 0">2</span><span style="display:inline-block;width:7px;padding-left:0.28px;line-height:0;font-size:11.96px;transform:scaleX(0.97);transform-origin:0 0">7</span></div><div class="cb" style="top:69px;line-height:16px"><span style="font-size:13.00px;letter-spacing:0.00px;line-height:0">办公室</span></div><div class="cb" style="top:87px;line-height:16px"><span style="font-size:13.00px;letter-spacing:0.00px;line-height:0">面积</span><span style="font-size:13.00px;letter-spacing:0.00px;line-height:0;position:relative;left:-2.86px">：</span><span style="display:inline-block;width:7px;padding-left:0.28px;line-height:0;font-size:11.96px;transform:scaleX(0.97);transform-origin:0 0">2</span><span style="display:inline-block;width:7px;padding-left:0.28px;line-height:0;font-size:11.96px;transform:scaleX(0.97);transform-origin:0 0">4</span><span style="display:inline-block;width:7px;padding-left:0.28px;line-height:0;font-size:11.96px;transform:scaleX(0.97);transform-origin:0 0">0</span><span style="display:inline-block;width:7px;padding-left:1.95px;line-height:0;font-size:11.96px;transform:scaleX(0.97);transform-origin:0 0">.</span><span style="display:inline-block;width:7px;padding-left:0.28px;line-height:0;font-size:11.96px;transform:scaleX(0.97);transform-origin:0 0">0</span><span style="display:inline-block;width:7px;padding-left:0.28px;line-height:0;font-size:11.96px;transform:scaleX(0.97);transform-origin:0 0">0</span></div></div>
<div class="a" style="left:1061px;top:391px;width:15px;height:27px;overflow:hidden"><div class="cn" style="left:-3px">2</div></div>
<div class="a" style="left:231px;top:125px;width:830px;height:592px;background:#4cc4bf"></div>
<div class="a" style="left:234px;top:158px;width:824px;height:556px;background:#eaf6f8"></div>
<div class="a" style="left:234px;top:232px;width:824px;height:412px;background:#fff"></div>
<div class="a" style="left:240px;top:131px;line-height:20px;color:#fff"><span style="font-size:17px;letter-spacing:-0.3px;line-height:0;-webkit-text-stroke:0.35px #fff">出租签约</span><span style="display:inline-block;width:8px;height:1.2px;background:#fff;vertical-align:4.5px;margin-left:0.5px;margin-right:-0.5px"></span><span style="font-size:17px;letter-spacing:-0.3px;line-height:0;-webkit-text-stroke:0.35px #fff">签约房间</span><span style="font-size:17px;line-height:0;position:relative;left:-3px">：</span></div>
<div class="a" style="left:400px;top:131px;line-height:20px;color:#fff;font-family:'Liberation Serif',serif;font-size:14.6px;-webkit-text-stroke:0.35px #fff"><span style="display:inline-block;width:8.8px;text-align:center">A</span><span style="display:inline-block;width:8.8px;text-align:center">1</span><span style="display:inline-block;width:8.8px;text-align:center">0</span><span style="display:inline-block;width:8.8px;text-align:center">0</span><span style="display:inline-block;width:8.8px;text-align:center">2</span></div>
<div class="a" style="left:481px;top:131px;line-height:20px;color:#fff"><span style="font-size:17px;letter-spacing:-0.3px;line-height:0;-webkit-text-stroke:0.35px #fff">子房间</span><span style="font-size:17px;line-height:0;position:relative;left:-3px">：</span></div>
<svg class="a" style="left:1036px;top:132px" width="20" height="16"><path d="M5 3 L15.5 13.5 M15.5 3 L5 13.5" stroke="#e00c0c" stroke-width="2.4" stroke-linecap="butt"/><path d="M3 2.8 H7.5 M13 2.8 H17.5 M3 13.7 H7.5 M13 13.7 H17.5" stroke="#e00c0c" stroke-width="1.3"/></svg>
<div class="a" style="left:567px;top:168px;color:#1414c8;font-weight:bold;line-height:22px;font-family:'Liberation Serif',serif"><span style="font-size:18px;letter-spacing:2px">租客签约信息录入</span></div>
<div class="a" style="left:290px;top:205px;line-height:20px;"><span style="font-size:16.00px;letter-spacing:0.00px;line-height:0">一、租住房屋和租客信息确认</span></div>
<div class="fsl" style="left:335px;top:245px;width:621px"></div>
<div class="a" style="left:563px;top:237px;width:164px;height:16px;background:#fff"></div>
<div class="a" style="left:564px;top:237px;line-height:16px;"><span style="font-size:13.00px;letter-spacing:-1.00px;line-height:0">房间信息详情（合计</span><span style="display:inline-block;width:6.0px"></span><span style="display:inline-block;width:6.0px;padding-left:0.00px;line-height:0;font-size:11.50px;transform:scaleX(0.94);transform-origin:0 0">1</span><span style="display:inline-block;width:6.0px"></span><span style="font-size:13.00px;letter-spacing:-1.00px;line-height:0">房间）</span></div>
<div class="fsl" style="left:335px;top:449px;width:621px"></div>
<div class="a" style="left:608px;top:441px;width:73px;height:16px;background:#fff"></div>
<div class="a" style="left:609px;top:441px;line-height:16px;"><span style="font-size:13.00px;letter-spacing:-1.00px;line-height:0">客户信息详情</span></div>
<div class="fsl" style="left:335px;top:597px;width:621px"></div>
<div class="a" style="left:620px;top:589px;width:49px;height:16px;background:#fff"></div>
<div class="a" style="left:621px;top:589px;line-height:16px;"><span style="font-size:13.00px;letter-spacing:-1.00px;line-height:0">其他信息</span></div>
<div class="a" style="left:373px;top:261px;line-height:16px;"><span style="font-size:13.00px;letter-spacing:-1.00px;line-height:0">小区名称</span><span style="font-size:13.00px;letter-spacing:-1.00px;line-height:0;position:relative;left:-2.64px">：</span></div>
<div class="ul" style="left:438px;top:276px;width:117px"></div>
<div class="a" style="left:440px;top:261px;line-height:16px;"><span style="font-size:13.00px;letter-spacing:-1.00px;line-height:0">紫竹小区</span></div>
<div class="a" style="left:373px;top:287px;line-height:16px;"><span style="font-size:13.00px;letter-spacing:-1.00px;line-height:0">房间户型</span><span style="font-size:13.00px;letter-spacing:-1.00px;line-height:0;position:relative;left:-2.64px">：</span></div>
<div class="ul" style="left:438px;top:302px;width:117px"></div>
<div class="a" style="left:440px;top:287px;line-height:16px;"><span style="font-size:13.00px;letter-spacing:-1.00px;line-height:0">二室一厅</span></div>
<div class="a" style="left:373px;top:313px;line-height:16px;"><span style="font-size:13.00px;letter-spacing:-1.00px;line-height:0">所在楼栋</span><span style="font-size:13.00px;letter-spacing:-1.00px;line-height:0;position:relative;left:-2.64px">：</span></div>
<div class="ul" style="left:438px;top:328px;width:117px"></div>
<div class="a" style="left:440px;top:313px;line-height:16px;"><span style="display:inline-block;width:6.0px;padding-left:0.00px;line-height:0;font-size:11.50px;transform:scaleX(0.94);transform-origin:0 0;position:relative;top:-1.5px">9</span><span style="font-size:13.00px;letter-spacing:-1.00px;line-height:0">号楼</span></div>
<div class="a" style="left:373px;top:339px;line-height:16px;"><span style="font-size:13.00px;letter-spacing:-1.00px;line-height:0">所在楼层</span><span style="font-size:13.00px;letter-spacing:-1.00px;line-height:0;position:relative;left:-2.64px">：</span></div>
<div class="ul" style="left:438px;top:354px;width:117px"></div>
<div class="a" style="left:440px;top:339px;line-height:16px;"><span style="display:inline-block;width:6.0px;padding-left:0.00px;line-height:0;font-size:11.50px;transform:scaleX(0.94);transform-origin:0 0;position:relative;top:-1.5px">2</span><span style="display:inline-block;width:6.0px;padding-left:0.00px;line-height:0;font-size:11.50px;transform:scaleX(0.94);transform-origin:0 0;position:relative;top:-1.5px">1</span></div>
<div class="a" style="left:373px;top:365px;line-height:16px;"><span style="font-size:13.00px;letter-spacing:-1.00px;line-height:0">房间编号</span><span style="font-size:13.00px;letter-spacing:-1.00px;line-height:0;position:relative;left:-2.64px">：</span></div>
<div class="ul" style="left:438px;top:380px;width:117px"></div>
<div class="a" style="left:440px;top:365px;line-height:16px;"><span style="display:inline-block;width:6.0px;padding-left:0.00px;line-height:0;font-size:11.50px;transform:scaleX(0.94);transform-origin:0 0;position:relative;top:-1.5px">A</span><span style="display:inline-block;width:6.0px;padding-left:0.00px;line-height:0;font-size:11.50px;transform:scaleX(0.94);transform-origin:0 0;position:relative;top:-1.5px">1</span><span style="display:inline-block;width:6.0px;padding-left:0.00px;line-height:0;font-size:11.50px;transform:scaleX(0.94);transform-origin:0 0;position:relative;top:-1.5px">0</span><span style="display:inline-block;width:6.0px;padding-left:0.00px;line-height:0;font-size:11.50px;transform:scaleX(0.94);transform-origin:0 0;position:relative;top:-1.5px">0</span><span style="display:inline-block;width:6.0px;padding-left:0.00px;line-height:0;font-size:11.50px;transform:scaleX(0.94);transform-origin:0 0;position:relative;top:-1.5px">2</span></div>
<div class="a" style="left:373px;top:390px;line-height:16px;"><span style="font-size:13.00px;letter-spacing:-1.00px;line-height:0">详细地址</span><span style="font-size:13.00px;letter-spacing:-1.00px;line-height:0;position:relative;left:-2.64px">：</span></div>
<div class="ul" style="left:438px;top:405px;width:484px"></div>
<div class="a" style="left:440px;top:390px;line-height:16px;"><span style="font-size:13.00px;letter-spacing:-1.00px;line-height:0">紫荆山路二里岗</span></div>
<div class="a" style="left:373px;top:415px;line-height:16px;"><span style="font-size:13.00px;letter-spacing:-1.00px;line-height:0">房屋备注</span><span style="font-size:13.00px;letter-spacing:-1.00px;line-height:0;position:relative;left:-2.64px">：</span></div>
<div class="ul" style="left:438px;top:427px;width:484px"></div>
<div class="a" style="left:739px;top:261px;line-height:16px;"><span style="font-size:13.00px;letter-spacing:-1.00px;line-height:0">房间名称</span><span style="font-size:13.00px;letter-spacing:-1.00px;line-height:0;position:relative;left:-2.64px">：</span></div>
<div class="ul" style="left:805px;top:276px;width:117px"></div>
<div class="a" style="left:807px;top:261px;line-height:16px;"><span style="display:inline-block;width:6.0px;padding-left:0.00px;line-height:0;font-size:11.50px;transform:scaleX(0.94);transform-origin:0 0;position:relative;top:-1.5px">A</span><span style="display:inline-block;width:6.0px;padding-left:0.00px;line-height:0;font-size:11.50px;transform:scaleX(0.94);transform-origin:0 0;position:relative;top:-1.5px">1</span><span style="display:inline-block;width:6.0px;padding-left:0.00px;line-height:0;font-size:11.50px;transform:scaleX(0.94);transform-origin:0 0;position:relative;top:-1.5px">0</span><span style="display:inline-block;width:6.0px;padding-left:0.00px;line-height:0;font-size:11.50px;transform:scaleX(0.94);transform-origin:0 0;position:relative;top:-1.5px">0</span><span style="display:inline-block;width:6.0px;padding-left:0.00px;line-height:0;font-size:11.50px;transform:scaleX(0.94);transform-origin:0 0;position:relative;top:-1.5px">2</span></div>
<div class="a" style="left:739px;top:287px;line-height:16px;"><span style="font-size:13.00px;letter-spacing:-1.00px;line-height:0">房间面积</span><span style="font-size:13.00px;letter-spacing:-1.00px;line-height:0;position:relative;left:-2.64px">：</span></div>
<div class="ul" style="left:805px;top:302px;width:117px"></div>
<div class="a" style="left:807px;top:287px;line-height:16px;"><span style="display:inline-block;width:6.0px;padding-left:0.00px;line-height:0;font-size:11.50px;transform:scaleX(0.94);transform-origin:0 0;position:relative;top:-1.5px">1</span><span style="display:inline-block;width:6.0px;padding-left:0.00px;line-height:0;font-size:11.50px;transform:scaleX(0.94);transform-origin:0 0;position:relative;top:-1.5px">1</span><span style="display:inline-block;width:6.0px;padding-left:0.00px;line-height:0;font-size:11.50px;transform:scaleX(0.94);transform-origin:0 0;position:relative;top:-1.5px">0</span><span style="display:inline-block;width:6.0px;padding-left:1.59px;line-height:0;font-size:11.50px;transform:scaleX(0.94);transform-origin:0 0;position:relative;top:-1.5px">.</span><span style="display:inline-block;width:6.0px;padding-left:0.00px;line-height:0;font-size:11.50px;transform:scaleX(0.94);transform-origin:0 0;position:relative;top:-1.5px">0</span><span style="display:inline-block;width:6.0px;padding-left:0.00px;line-height:0;font-size:11.50px;transform:scaleX(0.94);transform-origin:0 0;position:relative;top:-1.5px">0</span></div>
<div class="a" style="left:739px;top:313px;line-height:16px;"><span style="font-size:13.00px;letter-spacing:-1.00px;line-height:0">所在单元</span><span style="font-size:13.00px;letter-spacing:-1.00px;line-height:0;position:relative;left:-2.64px">：</span></div>
<div class="ul" style="left:805px;top:328px;width:117px"></div>
<div class="a" style="left:807px;top:313px;line-height:16px;"><span style="display:inline-block;width:6.0px;padding-left:0.00px;line-height:0;font-size:11.50px;transform:scaleX(0.94);transform-origin:0 0;position:relative;top:-1.5px">1</span><span style="font-size:13.00px;letter-spacing:-1.00px;line-height:0">单元</span></div>
<div class="a" style="left:739px;top:365px;line-height:16px;"><span style="font-size:13.00px;letter-spacing:-1.00px;line-height:0">子房编号</span><span style="font-size:13.00px;letter-spacing:-1.00px;line-height:0;position:relative;left:-2.64px">：</span></div>
<div class="ul" style="left:805px;top:380px;width:117px"></div>
<div class="a" style="left:369px;top:463px;line-height:16px;"><span style="font-size:13.00px;letter-spacing:-1.00px;line-height:0">客户姓名</span><span style="font-size:13.00px;letter-spacing:-1.00px;line-height:0;position:relative;left:-2.64px">：</span></div>
<div class="ul" style="left:437px;top:478px;width:117px"></div>
<div class="a" style="left:369px;top:489px;line-height:16px;"><span style="font-size:13.00px;letter-spacing:-1.00px;line-height:0">客户年龄</span><span style="font-size:13.00px;letter-spacing:-1.00px;line-height:0;position:relative;left:-2.64px">：</span></div>
<div class="ul" style="left:437px;top:504px;width:117px"></div>
<div class="a" style="left:369px;top:515px;line-height:16px;"><span style="font-size:13.00px;letter-spacing:-1.00px;line-height:0">客户民族</span><span style="font-size:13.00px;letter-spacing:-1.00px;line-height:0;position:relative;left:-2.64px">：</span></div>
<div class="ul" style="left:437px;top:530px;width:117px"></div>
<div class="a" style="left:369px;top:541px;line-height:16px;"><span style="font-size:13.00px;letter-spacing:-1.00px;line-height:0">证件类型</span><span style="font-size:13.00px;letter-spacing:-1.00px;line-height:0;position:relative;left:-2.64px">：</span></div>
<div class="ul" style="left:437px;top:556px;width:117px"></div>
<div class="a" style="left:369px;top:567px;line-height:16px;"><span style="font-size:13.00px;letter-spacing:-1.00px;line-height:0">客户职业</span><span style="font-size:13.00px;letter-spacing:-1.00px;line-height:0;position:relative;left:-2.64px">：</span></div>
<div class="ul" style="left:437px;top:582px;width:117px"></div>
<div class="a" style="left:739px;top:463px;line-height:16px;"><span style="font-size:13.00px;letter-spacing:-1.00px;line-height:0">手机号码</span><span style="font-size:13.00px;letter-spacing:-1.00px;line-height:0;position:relative;left:-2.64px">：</span></div>
<div class="ul" style="left:804px;top:478px;width:117px"></div>
<div class="a" style="left:739px;top:489px;line-height:16px;"><span style="font-size:13.00px;letter-spacing:-1.00px;line-height:0">客户性别</span><span style="font-size:13.00px;letter-spacing:-1.00px;line-height:0;position:relative;left:-2.64px">：</span></div>
<div class="ul" style="left:804px;top:504px;width:117px"></div>
<div class="a" style="left:806px;top:489px;line-height:16px;"><span style="font-size:13.00px;letter-spacing:-1.00px;line-height:0">女</span></div>
<div class="a" style="left:739px;top:541px;line-height:16px;"><span style="font-size:13.00px;letter-spacing:-1.00px;line-height:0">证件编号</span><span style="font-size:13.00px;letter-spacing:-1.00px;line-height:0;position:relative;left:-2.64px">：</span></div>
<div class="ul" style="left:804px;top:556px;width:117px"></div>
<div class="a" style="left:739px;top:567px;line-height:16px;"><span style="font-size:13.00px;letter-spacing:-1.00px;line-height:0">单位性质</span><span style="font-size:13.00px;letter-spacing:-1.00px;line-height:0;position:relative;left:-2.64px">：</span></div>
<div class="ul" style="left:804px;top:582px;width:117px"></div>
<div class="a" style="left:352px;top:608px;line-height:16px;"><span style="font-size:13.00px;letter-spacing:-1.00px;line-height:0">营销人员</span><span style="font-size:13.00px;letter-spacing:-1.00px;line-height:0;position:relative;left:-2.64px">：</span></div>
<div class="ul" style="left:416px;top:623px;width:117px"></div>
<div class="a" style="left:720px;top:608px;line-height:16px;"><span style="font-size:13.00px;letter-spacing:-1.00px;line-height:0">房间管理员</span><span style="font-size:13.00px;letter-spacing:-1.00px;line-height:0;position:relative;left:-2.64px">：</span></div>
<div class="ul" style="left:797px;top:623px;width:117px"></div>
<svg class="a" style="left:0;top:0" width="1076" height="801" viewBox="0 0 1076 801"><g fill="#000"><path d="M542 520 h7 l-3.5 4 z"/><path d="M542 546 h7 l-3.5 4 z"/><path d="M542 572 h7 l-3.5 4 z"/><path d="M908 494 h7 l-3.5 4 z"/><path d="M908 572 h7 l-3.5 4 z"/><path d="M902 612 h7 l-3.5 4 z"/></g><g><circle cx="570.7" cy="369.3" r="5.3" fill="#cfe3f3" stroke="#2b3858" stroke-width="1.3"/><path d="M571.7 366.3 a3 3 0 0 1 2.5 2.5" stroke="#fff" stroke-width="1" fill="none"/><path d="M574.9000000000001 373.5 L579.7 378.3" stroke="#9a5a18" stroke-width="3.4" stroke-linecap="round"/><path d="M575.1 373.7 L579.5 378.1" stroke="#f2bb48" stroke-width="1.8" stroke-linecap="round"/></g><g><circle cx="570.7" cy="468.3" r="5.3" fill="#cfe3f3" stroke="#2b3858" stroke-width="1.3"/><path d="M571.7 465.3 a3 3 0 0 1 2.5 2.5" stroke="#fff" stroke-width="1" fill="none"/><path d="M574.9000000000001 472.5 L579.7 477.3" stroke="#9a5a18" stroke-width="3.4" stroke-linecap="round"/><path d="M575.1 472.7 L579.5 477.1" stroke="#f2bb48" stroke-width="1.8" stroke-linecap="round"/></g><path d="M570.7 516.5 h4.6 v4.1 h4.1 v4.6 h-4.1 v4.1 h-4.6 v-4.1 h-4.1 v-4.6 h4.1 z" fill="#f9d676" stroke="#8c5a1e" stroke-width="1"/><path d="M570.7 542.5 h4.6 v4.1 h4.1 v4.6 h-4.1 v4.1 h-4.6 v-4.1 h-4.1 v-4.6 h4.1 z" fill="#f9d676" stroke="#8c5a1e" stroke-width="1"/><path d="M545.7 609.1 h4.6 v4.1 h4.1 v4.6 h-4.1 v4.1 h-4.6 v-4.1 h-4.1 v-4.6 h4.1 z" fill="#f9d676" stroke="#8c5a1e" stroke-width="1"/><path d="M926.7 609.1 h4.6 v4.1 h4.1 v4.6 h-4.1 v4.1 h-4.6 v-4.1 h-4.1 v-4.6 h4.1 z" fill="#f9d676" stroke="#8c5a1e" stroke-width="1"/></svg>
<div class="btn" style="left:540px;top:660px;width:100px;height:40px;line-height:41px"><span style="font-size:17.00px;letter-spacing:-1.00px;line-height:0">取消签约</span></div>
<div class="btn" style="left:652px;top:659px;width:100px;height:40px;line-height:41px"><span style="font-size:17.00px;letter-spacing:-1.00px;line-height:0">下一步</span></div>
</body></html>
